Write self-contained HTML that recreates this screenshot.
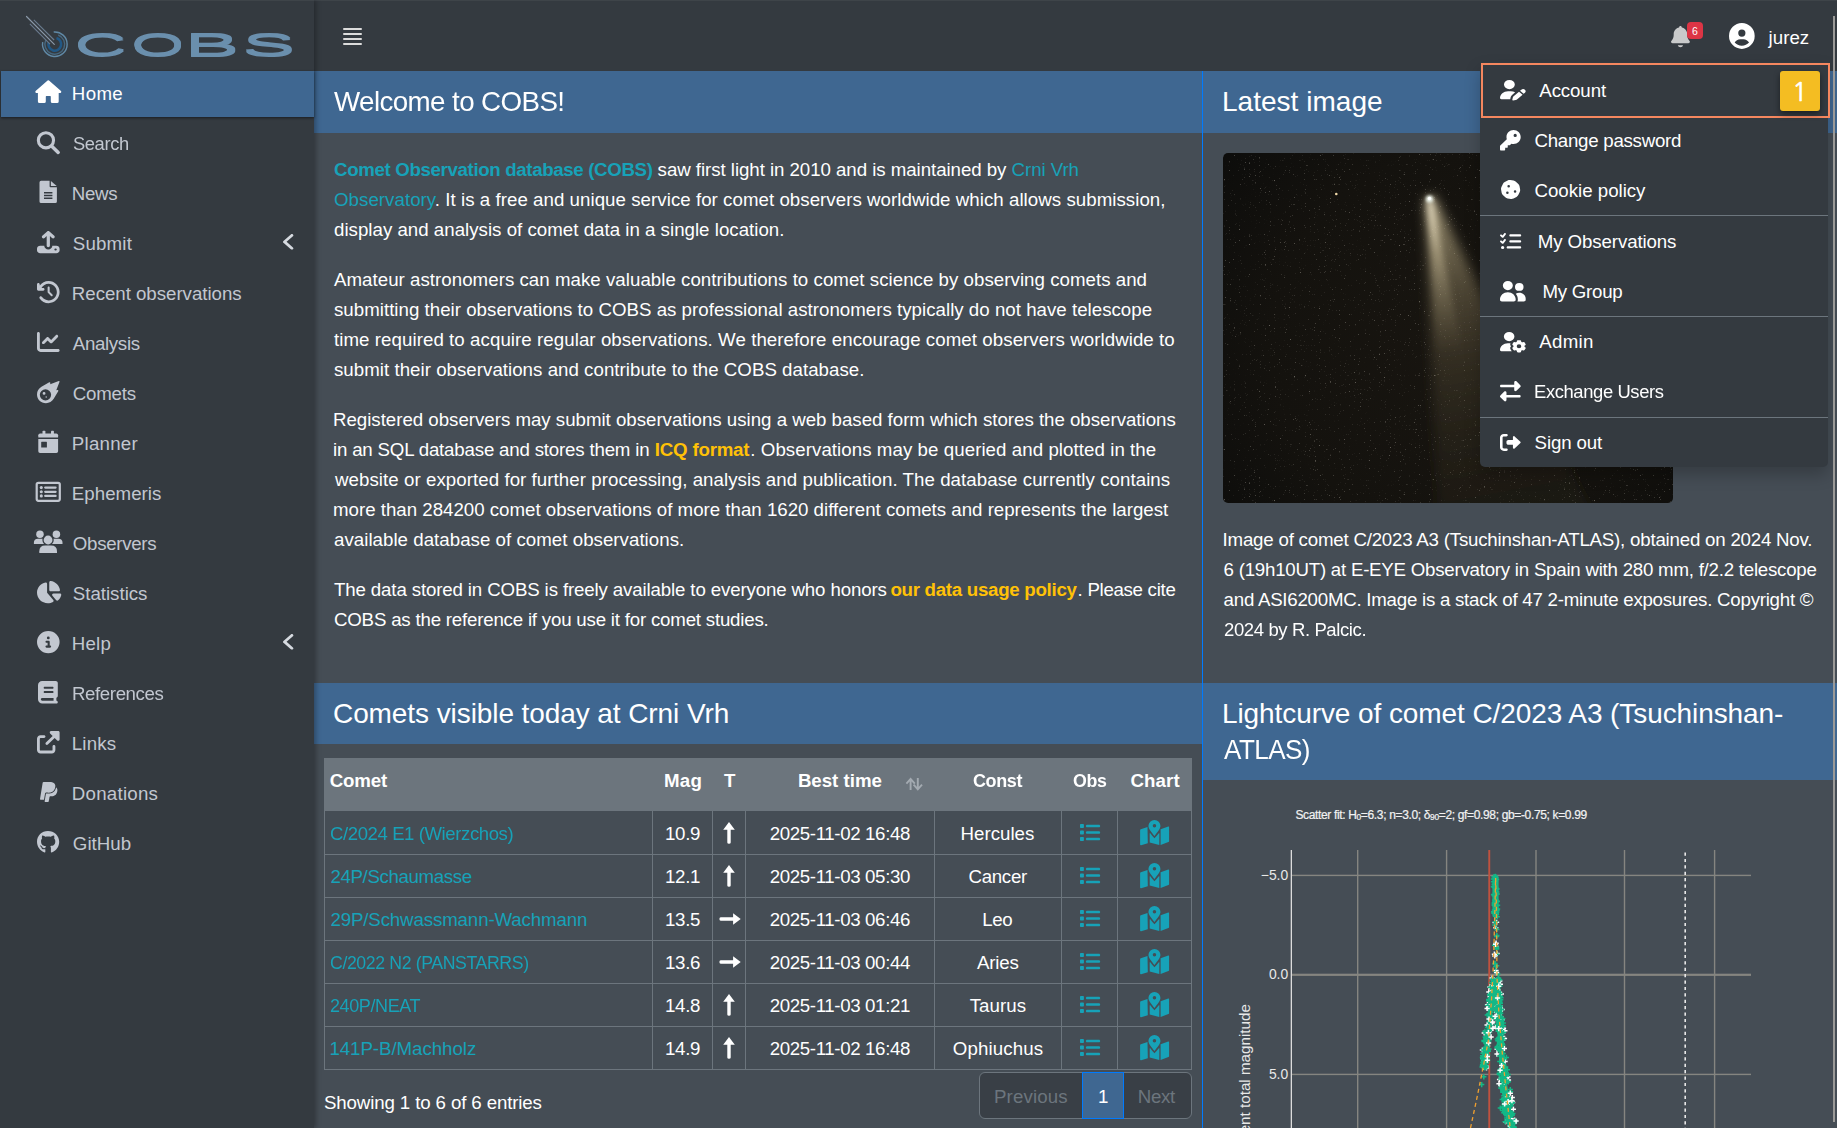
<!DOCTYPE html>
<html lang="en"><head><meta charset="utf-8"><title>COBS - Comet OBServation database</title>
<style>
html,body{margin:0;padding:0}
body{width:1837px;height:1128px;overflow:hidden;position:relative;background:#454d55;font-family:"Liberation Sans",sans-serif;color:#fff}
.abs,.t,.i{position:absolute}
.t{white-space:pre;line-height:30px;height:30px;margin:0;font-weight:400;text-decoration:none}
p{margin:0}
.t b{font-weight:700}
.i{display:block;overflow:visible}
#sidebar{left:0;top:0;width:314px;height:1128px;background:#343a40;box-shadow:2px 0 5px rgba(0,0,0,.3);z-index:5}
#navbar{left:314px;top:0;width:1523px;height:71px;background:#343a40;z-index:4}
#homebar{left:1px;top:71px;width:313px;height:46px;background:#3f6791;box-shadow:0 1px 3px rgba(0,0,0,.25),0 1px 2px rgba(0,0,0,.3)}
.hdr{background:#3f6791}
.bar{position:absolute;left:343px;width:19px;height:2px;background:#dcdcdc;border-radius:1px}
table{border-collapse:collapse}
.cell{position:absolute;border:1px solid #6c757d;box-sizing:border-box}
#dd{left:1480px;top:62px;width:348px;height:405px;background:#343a40;border-radius:0 0 5px 5px;box-shadow:0 8px 16px rgba(0,0,0,.22);z-index:20}
.div{position:absolute;left:0;width:348px;height:1px;background:#6c757d}
</style></head><body>

<aside id="sidebar" class="abs">
<div id="homebar" class="abs"></div>
<svg class="i" style="left:20px;top:8px;width:285px;height:58px" viewBox="20 8 285 58">
<g fill="none" stroke-linecap="butt"><path d="M56.5 38.1A6.4 6.4 0 1 1 48.6 42.6" stroke="#225885" stroke-width="2.6"/><path d="M58.2 35.0A9.9 9.9 0 1 1 45.8 40.1" stroke="#46677f" stroke-width="1.4"/><path d="M53.7 32.0A12.3 12.3 0 1 1 42.7 42.2" stroke="#6089a6" stroke-width="1.4"/><path d="M26.5 16.5 54.3 44.3" stroke="#8a98a8" stroke-width="1.2" stroke-linecap="round"/><path d="M33.8 19.9 54.1 40" stroke="#6a7b8e" stroke-width="1.1"/><path d="M29.9 23.8 50 44.1" stroke="#6a7b8e" stroke-width="1.1"/></g>
<defs><filter id="thk" filterUnits="userSpaceOnUse" x="70" y="25" width="230" height="40"><feOffset in="SourceGraphic" dy="-1.3" result="a"/><feOffset in="SourceGraphic" dy="1.3" result="b"/><feMerge><feMergeNode in="a"/><feMergeNode in="SourceGraphic"/><feMergeNode in="b"/></feMerge></filter></defs><text y="55.5" font-family="Liberation Sans, sans-serif" font-size="31.64" fill="#6b8fad" filter="url(#thk)"><tspan x="74.53" textLength="52.23" lengthAdjust="spacingAndGlyphs">C</tspan><tspan x="131.27" textLength="53.10" lengthAdjust="spacingAndGlyphs">O</tspan><tspan x="184.19" textLength="55.39" lengthAdjust="spacingAndGlyphs">B</tspan><tspan x="242.19" textLength="53.06" lengthAdjust="spacingAndGlyphs">S</tspan></text></svg>
<nav>
<svg class="i" style="left:33px;top:78px;width:30px;height:27px" viewBox="33 78 30 27"><path fill="#fff" d="M47.6 80.5Q48.3 79.9 49 80.5L61 90.9Q61.9 91.9 60.6 93H58.7V101.5Q58.7 103.1 57.1 103.1H52.4Q50.8 103.1 50.8 101.5V96.7Q50.8 96.1 50.2 96.1H46.4Q45.8 96.1 45.8 96.7V101.5Q45.8 103.1 44.2 103.1H39.5Q37.9 103.1 37.9 101.5V93H36Q34.7 91.9 35.6 90.9Z"/></svg>
<a href="#" class="t" style="left:71.80px;top:78.52px;font-size:18.7px;letter-spacing:0.348px;color:#fff;">Home</a>
<svg class="i" style="left:34px;top:129px;width:28px;height:27px" viewBox="34 129 28 27" fill="none" stroke="#c2c7d0"><circle cx="45.95" cy="140.3" r="7.6" stroke-width="3.1"/><path d="M51.8 146.2 58.2 152.4" stroke-width="3.5" stroke-linecap="round"/></svg>
<a href="#" class="t" style="left:72.80px;top:128.52px;font-size:18.7px;letter-spacing:-0.400px;color:#c2c7d0;transform:scaleX(0.9803);transform-origin:0 0;">Search</a>
<svg class="i" style="left:37px;top:178px;width:22px;height:27px" viewBox="37 178 22 27" fill="#c2c7d0"><path d="M41.1 180.8H49.6V186.3Q49.6 187.2 50.5 187.2H56.9V201.4Q56.9 203 55.3 203H41.1Q39.5 203 39.5 201.4V182.4Q39.5 180.8 41.1 180.8Z"/><path d="M50.9 181 56.7 186H50.9Z"/><path d="M44 192.8H52.4M44 195.5H52.4M44 198.2H52.4" stroke="#343a40" stroke-width="1.4" fill="none"/></svg>
<a href="#" class="t" style="left:71.80px;top:178.52px;font-size:18.7px;letter-spacing:-0.295px;color:#c2c7d0;">News</a>
<svg class="i" style="left:36.8px;top:230.8px;width:22.6px;height:22.2px;" viewBox="0.0 0.0 448.0 480.0" preserveAspectRatio="none" fill="#c2c7d0"><path d="M256 109.3V320c0 17.7-14.3 32-32 32s-32-14.3-32-32V109.3l-41.4 41.4c-12.5 12.5-32.8 12.5-45.3 0s-12.5-32.8 0-45.3l96-96c12.5-12.5 32.8-12.5 45.3 0l96 96c12.5 12.5 12.5 32.8 0 45.3s-32.8 12.5-45.3 0zM224 400c44.2 0 80-35.8 80-80h80c35.3 0 64 28.7 64 64v32c0 35.3-28.7 64-64 64H64c-35.3 0-64-28.7-64-64v-32c0-35.3 28.7-64 64-64h80c0 44.2 35.8 80 80 80m144 24a24 24 0 1 0 0-48 24 24 0 1 0 0 48"/></svg>
<a href="#" class="t" style="left:72.80px;top:228.52px;font-size:18.7px;letter-spacing:0.186px;color:#c2c7d0;">Submit</a>
<svg class="i" style="left:36.8px;top:281.0px;width:22.6px;height:22.2px;" viewBox="16.0 0.0 528.0 512.0" preserveAspectRatio="none" fill="#c2c7d0"><path d="M288 64c106 0 192 86 192 192s-86 192-192 192c-65.2 0-122.9-32.5-157.6-82.3-10.1-14.5-30.1-18-44.6-7.9s-18 30.1-7.9 44.6C124.1 468.6 201 512 288 512c141.4 0 256-114.6 256-256S429.4 0 288 0C202.3 0 126.5 42.1 80 106.7V80c0-17.7-14.3-32-32-32S16 62.3 16 80v112c0 17.7 14.3 32 32 32h112.1c17.7 0 32-14.3 32-32s-14.3-32-32-32h-38.3C154.9 102.6 217 64 288 64m24 88c0-13.3-10.7-24-24-24s-24 10.7-24 24v104c0 6.4 2.5 12.5 7 17l72 72c9.4 9.4 24.6 9.4 33.9 0s9.4-24.6 0-33.9l-65-65V152z"/></svg>
<a href="#" class="t" style="left:71.80px;top:278.52px;font-size:18.7px;letter-spacing:-0.029px;color:#c2c7d0;">Recent observations</a>
<svg class="i" style="left:36.8px;top:332.0px;width:22.6px;height:19.9px;" viewBox="0.0 32.0 512.0 448.0" preserveAspectRatio="none" fill="#c2c7d0"><path d="M64 64c0-17.7-14.3-32-32-32S0 46.3 0 64v336c0 44.2 35.8 80 80 80h400c17.7 0 32-14.3 32-32s-14.3-32-32-32H80c-8.8 0-16-7.2-16-16zm406.6 86.6c12.5-12.5 12.5-32.8 0-45.3s-32.8-12.5-45.3 0L320 210.7l-57.4-57.3c-12.5-12.5-32.8-12.5-45.3 0l-96 96c-12.5 12.5-12.5 32.8 0 45.3s32.8 12.5 45.3 0l73.4-73.4 57.4 57.4c12.5 12.5 32.8 12.5 45.3 0l128-128z"/></svg>
<a href="#" class="t" style="left:72.80px;top:328.52px;font-size:18.7px;letter-spacing:-0.335px;color:#c2c7d0;">Analysis</a>
<svg class="i" style="left:36.8px;top:380.8px;width:22.6px;height:22.2px;" viewBox="0.0 0.1 512.0 511.9" preserveAspectRatio="none" fill="#c2c7d0"><path d="M493.7.9 299.5 75.6l2.3-29.3c1-12.8-12.8-21.5-24-15.1L101.3 133.4C38.6 169.7 0 236.6 0 309c0 112.1 90.9 203 203 203 72.4 0 139.3-38.6 175.6-101.3l102.2-176.4c6.5-11.1-2.2-25-15.1-24l-29.3 2.3 74.7-194.2c.6-1.5.9-3.2.9-4.8 0-7.5-6-13.5-13.5-13.5q-2.55 0-4.8.9zM192 192a128 128 0 1 1 0 256 128 128 0 1 1 0-256m0 96a32 32 0 1 0-64 0 32 32 0 1 0 64 0m16 96a16 16 0 1 0 0-32 16 16 0 1 0 0 32"/></svg>
<a href="#" class="t" style="left:72.80px;top:378.52px;font-size:18.7px;letter-spacing:-0.228px;color:#c2c7d0;">Comets</a>
<svg class="i" style="left:36px;top:428px;width:25px;height:27px" viewBox="36 428 25 27" fill="#c2c7d0"><rect x="42.5" y="430.8" width="2.9" height="4.2" rx=".7"/><rect x="51" y="430.8" width="2.9" height="4.2" rx=".7"/><path d="M38.3 435.3Q38.3 433.5 40.1 433.5H56.3Q58.1 433.5 58.1 435.3V437.6H38.3Z"/><path fill-rule="evenodd" d="M38.3 438.9H58.1V451.2Q58.1 453 56.3 453H40.1Q38.3 453 38.3 451.2ZM41.6 441.8Q41.2 441.8 41.2 442.2V447.2Q41.2 447.6 41.6 447.6H46.5Q46.9 447.6 46.9 447.2V442.2Q46.9 441.8 46.5 441.8Z"/></svg>
<a href="#" class="t" style="left:71.80px;top:428.52px;font-size:18.7px;letter-spacing:0.235px;color:#c2c7d0;">Planner</a>
<svg class="i" style="left:33px;top:479px;width:30px;height:25px" viewBox="33 479 30 25" fill="#c2c7d0"><rect x="36.7" y="482.9" width="23.1" height="17.9" rx="1.7" fill="none" stroke="#c2c7d0" stroke-width="2.2"/><circle cx="41.3" cy="487.6" r="1.55"/><rect x="44.1" y="486.5" width="12.6" height="2.2" rx="1.1"/><circle cx="41.3" cy="491.8" r="1.55"/><rect x="44.1" y="490.7" width="12.6" height="2.2" rx="1.1"/><circle cx="41.3" cy="495.9" r="1.55"/><rect x="44.1" y="494.8" width="12.6" height="2.2" rx="1.1"/></svg>
<a href="#" class="t" style="left:71.80px;top:478.52px;font-size:18.7px;letter-spacing:0.028px;color:#c2c7d0;">Ephemeris</a>
<svg class="i" style="left:32px;top:528px;width:33px;height:27px" viewBox="32 528 33 27" fill="#c2c7d0"><circle cx="39.95" cy="534.3" r="3.75"/><circle cx="56.4" cy="534.3" r="3.75"/><path d="M33.9 543.9V542.6Q33.9 538.8 38 538.8H45V543.9ZM62.5 543.9V542.6Q62.5 538.8 58.4 538.8H51V543.9Z"/><circle cx="48.05" cy="540" r="5.7" fill="#343a40"/><circle cx="48.05" cy="540" r="4.4"/><path d="M39.3 553V551.2Q39.3 545.4 45.2 545.4H51Q57 545.4 57 551.2V553Q57 553.1 56.9 553.1H39.4Q39.3 553.1 39.3 553Z"/></svg>
<a href="#" class="t" style="left:72.80px;top:528.52px;font-size:18.7px;letter-spacing:-0.294px;color:#c2c7d0;">Observers</a>
<svg class="i" style="left:36.8px;top:580.8px;width:24.3px;height:22.2px;" viewBox="32.4 1.9 539.5 510.1" preserveAspectRatio="none" fill="#c2c7d0"><path d="M512.4 240h-176c-17.7 0-32-14.3-32-32V32c0-17.7 14.4-32.2 31.9-29.9 107 14.2 191.8 99 206 206 2.3 17.5-12.2 31.9-29.9 31.9M222.6 37.2c18.1-3.8 33.8 11 33.8 29.5V264c0 5.6 2 11 5.5 15.3L394 438.7c11.7 14.1 9.2 35.4-6.9 44.1C353 501.4 313.9 512 272.4 512c-132.5 0-240-107.5-240-240 0-115.5 81.5-211.9 190.2-234.8M477.8 288h64c18.5 0 33.3 15.7 29.5 33.8-10.2 48.4-35 91.4-69.6 124.2-12.3 11.7-31.6 9.2-42.4-3.9l-84.4-101.7c-17.3-20.9-2.4-52.4 24.6-52.4h78.2z"/></svg>
<a href="#" class="t" style="left:72.80px;top:578.52px;font-size:18.7px;letter-spacing:-0.014px;color:#c2c7d0;">Statistics</a>
<svg class="i" style="left:36.8px;top:630.8px;width:22.6px;height:22.2px;" viewBox="0.0 0.0 512.0 512.0" preserveAspectRatio="none" fill="#c2c7d0"><path d="M256 512a256 256 0 1 0 0-512 256 256 0 1 0 0 512m-32-352a32 32 0 1 1 64 0 32 32 0 1 1-64 0m-8 64h48c13.3 0 24 10.7 24 24v88h8c13.3 0 24 10.7 24 24s-10.7 24-24 24h-80c-13.3 0-24-10.7-24-24s10.7-24 24-24h24v-64h-24c-13.3 0-24-10.7-24-24s10.7-24 24-24"/></svg>
<a href="#" class="t" style="left:71.80px;top:628.52px;font-size:18.7px;letter-spacing:0.187px;color:#c2c7d0;">Help</a>
<svg class="i" style="left:38.3px;top:680.6px;width:19.8px;height:22.6px;" viewBox="0.0 0.0 448.0 512.0" preserveAspectRatio="none" fill="#c2c7d0"><path d="M384 512H96c-53 0-96-43-96-96V96C0 43 43 0 96 0h304c26.5 0 48 21.5 48 48v288c0 20.9-13.4 38.7-32 45.3V448c17.7 0 32 14.3 32 32s-14.3 32-32 32zM96 384c-17.7 0-32 14.3-32 32s14.3 32 32 32h256v-64zm32-232c0 13.3 10.7 24 24 24h176c13.3 0 24-10.7 24-24s-10.7-24-24-24H152c-13.3 0-24 10.7-24 24m24 72c-13.3 0-24 10.7-24 24s10.7 24 24 24h176c13.3 0 24-10.7 24-24s-10.7-24-24-24z"/></svg>
<a href="#" class="t" style="left:71.80px;top:678.52px;font-size:18.7px;letter-spacing:-0.400px;color:#c2c7d0;transform:scaleX(0.9987);transform-origin:0 0;">References</a>
<svg class="i" style="left:36.8px;top:730.6px;width:22.6px;height:22.4px;" viewBox="0.0 0.0 512.0 512.0" preserveAspectRatio="none" fill="#c2c7d0"><path d="M290.4 19.8C295.4 7.8 307.1 0 320 0h160c17.7 0 32 14.3 32 32v160c0 12.9-7.8 24.6-19.8 29.6s-25.7 2.2-34.9-6.9L400 157.3 246.6 310.6c-12.5 12.5-32.8 12.5-45.3 0s-12.5-32.8 0-45.3L354.7 112l-57.3-57.4c-9.2-9.2-11.9-22.9-6.9-34.9zM0 176c0-44.2 35.8-80 80-80h80c17.7 0 32 14.3 32 32s-14.3 32-32 32H80c-8.8 0-16 7.2-16 16v256c0 8.8 7.2 16 16 16h256c8.8 0 16-7.2 16-16v-80c0-17.7 14.3-32 32-32s32 14.3 32 32v80c0 44.2-35.8 80-80 80H80c-44.2 0-80-35.8-80-80z"/></svg>
<a href="#" class="t" style="left:71.80px;top:728.52px;font-size:18.7px;letter-spacing:0.155px;color:#c2c7d0;">Links</a>
<svg class="i" style="left:39.5px;top:781.7px;width:17.4px;height:19.9px;" viewBox="0.6 29.3 383.9 453.5" preserveAspectRatio="none" fill="#c2c7d0"><path d="M111.9 295.9c-3.5 19.2-17.4 108.7-21.5 134-.3 1.8-1 2.5-3 2.5H12.8c-7.6 0-13.1-6.6-12.1-13.9L59.3 46.6c1.5-9.6 10.1-16.9 20-16.9 152.3 0 165.1-3.7 204 11.4 60.1 23.3 65.6 79.5 44 140.3-21.5 62.6-72.5 89.5-140.1 90.3-43.4.7-69.5-7-75.3 24.2M357.6 152c-1.8-1.3-2.5-1.8-3 1.3-2 11.4-5.1 22.5-8.8 33.6-39.9 113.8-150.5 103.9-204.5 103.9-6.1 0-10.1 3.3-10.9 9.4-22.6 140.4-27.1 169.7-27.1 169.7-1 7.1 3.5 12.9 10.6 12.9h63.5c8.6 0 15.7-6.3 17.4-14.9.7-5.4-1.1 6.1 14.4-91.3 4.6-22 14.3-19.7 29.3-19.7 71 0 126.4-28.8 142.9-112.3 6.5-34.8 4.6-71.4-23.8-92.6"/></svg>
<a href="#" class="t" style="left:71.80px;top:778.52px;font-size:18.7px;letter-spacing:0.249px;color:#c2c7d0;">Donations</a>
<svg class="i" style="left:36.8px;top:830.8px;width:22.2px;height:21.5px;" viewBox="8.0 8.0 496.0 483.6" preserveAspectRatio="none" fill="#c2c7d0"><path d="M173.9 397.4c0 2-2.3 3.6-5.2 3.6-3.3.3-5.6-1.3-5.6-3.6 0-2 2.3-3.6 5.2-3.6 3-.3 5.6 1.3 5.6 3.6m-31.1-4.5c-.7 2 1.3 4.3 4.3 4.9 2.6 1 5.6 0 6.2-2s-1.3-4.3-4.3-5.2c-2.6-.7-5.5.3-6.2 2.3m44.2-1.7c-2.9.7-4.9 2.6-4.6 4.9.3 2 2.9 3.3 5.9 2.6 2.9-.7 4.9-2.6 4.6-4.6-.3-1.9-3-3.2-5.9-2.9M252.8 8C114.1 8 8 113.3 8 252c0 110.9 69.8 205.8 169.5 239.2 12.8 2.3 17.3-5.6 17.3-12.1 0-6.2-.3-40.4-.3-61.4 0 0-70 15-84.7-29.8 0 0-11.4-29.1-27.8-36.6 0 0-22.9-15.7 1.6-15.4 0 0 24.9 2 38.6 25.8 21.9 38.6 58.6 27.5 72.9 20.9 2.3-16 8.8-27.1 16-33.7-55.9-6.2-112.3-14.3-112.3-110.5 0-27.5 7.6-41.3 23.6-58.9-2.6-6.5-11.1-33.3 2.6-67.9 20.9-6.5 69 27 69 27 20-5.6 41.5-8.5 62.8-8.5s42.8 2.9 62.8 8.5c0 0 48.1-33.6 69-27 13.7 34.7 5.2 61.4 2.6 67.9 16 17.7 25.8 31.5 25.8 58.9 0 96.5-58.9 104.2-114.8 110.5 9.2 7.9 17 22.9 17 46.4 0 33.7-.3 75.4-.3 83.6 0 6.5 4.6 14.4 17.3 12.1C436.2 457.8 504 362.9 504 252 504 113.3 391.5 8 252.8 8M105.2 352.9c-1.3 1-1 3.3.7 5.2 1.6 1.6 3.9 2.3 5.2 1 1.3-1 1-3.3-.7-5.2-1.6-1.6-3.9-2.3-5.2-1m-10.8-8.1c-.7 1.3.3 2.9 2.3 3.9 1.6 1 3.6.7 4.3-.7.7-1.3-.3-2.9-2.3-3.9-2-.6-3.6-.3-4.3.7m32.4 35.6c-1.6 1.3-1 4.3 1.3 6.2 2.3 2.3 5.2 2.6 6.5 1 1.3-1.3.7-4.3-1.3-6.2-2.2-2.3-5.2-2.6-6.5-1m-11.4-14.7c-1.6 1-1.6 3.6 0 5.9s4.3 3.3 5.6 2.3c1.6-1.3 1.6-3.9 0-6.2-1.4-2.3-4-3.3-5.6-2"/></svg>
<a href="#" class="t" style="left:72.80px;top:828.52px;font-size:18.7px;letter-spacing:0.046px;color:#c2c7d0;">GitHub</a>
<svg class="i" style="left:282.8px;top:233.7px;width:10.4px;height:15.6px;" viewBox="0.0 63.9 224.1 384.1" preserveAspectRatio="none" fill="#d6dae0"><path d="M9.4 233.4c-12.5 12.5-12.5 32.8 0 45.3l160 160c12.5 12.5 32.8 12.5 45.3 0s12.5-32.8 0-45.3L77.3 256l137.3-137.4c12.5-12.5 12.5-32.8 0-45.3s-32.8-12.5-45.3 0l-160 160z"/></svg>
<svg class="i" style="left:282.8px;top:633.7px;width:10.4px;height:15.6px;" viewBox="0.0 63.9 224.1 384.1" preserveAspectRatio="none" fill="#d6dae0"><path d="M9.4 233.4c-12.5 12.5-12.5 32.8 0 45.3l160 160c12.5 12.5 32.8 12.5 45.3 0s12.5-32.8 0-45.3L77.3 256l137.3-137.4c12.5-12.5 12.5-32.8 0-45.3s-32.8-12.5-45.3 0l-160 160z"/></svg>
</nav></aside>
<header><div id="navbar" class="abs"></div>
<div class="abs" style="left:0;top:0;width:1837px;height:1px;background:rgba(255,255,255,.05);z-index:30"></div>
<div style="position:absolute;z-index:6;left:0;top:0">
<div class="bar" style="top:28px"></div>
<div class="bar" style="top:33px"></div>
<div class="bar" style="top:38px"></div>
<div class="bar" style="top:43px"></div>
<svg class="i" style="left:1671.1px;top:25.7px;width:18.9px;height:21.3px;" viewBox="-0.0 0.0 447.9 512.0" preserveAspectRatio="none" fill="#c9cacb"><path d="M224 0c-17.7 0-32 14.3-32 32v3.2C119 50 64 114.6 64 192v21.7c0 48.1-16.4 94.8-46.4 132.4l-9.8 12.2C2.7 364.6 0 372.4 0 380.5 0 400.1 15.9 416 35.5 416h376.9c19.6 0 35.5-15.9 35.5-35.5 0-8.1-2.7-15.9-7.8-22.2l-9.8-12.2c-29.9-37.6-46.3-84.3-46.3-132.4V192c0-77.4-55-142-128-156.8V32c0-17.7-14.3-32-32-32m-62 464c7.1 27.6 32.2 48 62 48s54.9-20.4 62-48z"/></svg>
<div class="abs" style="left:1687px;top:22px;width:16px;height:17px;background:#dc3545;border-radius:4px"></div>
<span class="t" style="left:1692.00px;top:16.46px;font-size:10.5px;letter-spacing:0.000px;color:#fff;">6</span>
<svg class="i" style="left:1728.7px;top:22.5px;width:25.7px;height:25.9px;" viewBox="0.0 0.0 512.0 512.0" preserveAspectRatio="none" fill="#fff"><path d="M399 384.2c-22.1-38.4-63.6-64.2-111-64.2h-64c-47.4 0-88.9 25.8-111 64.2 35.2 39.2 86.2 63.8 143 63.8s107.8-24.7 143-63.8M0 256a256 256 0 1 1 512 0 256 256 0 1 1-512 0m256 16a72 72 0 1 0 0-144 72 72 0 1 0 0 144"/></svg>
<a href="#" class="t" style="left:1768.60px;top:22.52px;font-size:18.7px;letter-spacing:0.010px;color:#fff;">jurez</a>
</div></header>
<main><section>
<div class="abs hdr" style="left:314px;top:71px;width:888px;height:62px"></div>
<h3 class="t" style="left:334.00px;top:86.90px;font-size:28px;letter-spacing:-0.599px;color:#fff;transform:scaleX(0.9907);transform-origin:0 0;">Welcome to COBS!</h3>
<p>
<span class="t" style="left:334.00px;top:154.52px;font-size:18.7px;letter-spacing:-0.353px;color:#17a2b8;font-weight:700;">Comet Observation database (COBS)</span>
<span class="t" style="left:657.60px;top:154.52px;font-size:18.7px;letter-spacing:-0.053px;color:#fff;">saw first light in 2010 and is maintained by <span style="color:#17a2b8">Crni Vrh</span></span>
<span class="t" style="left:334.00px;top:184.52px;font-size:18.7px;letter-spacing:0.041px;color:#fff;"><span style="color:#17a2b8">Observatory</span>. It is a free and unique service for comet observers worldwide which allows submission,</span>
<span class="t" style="left:334.00px;top:214.52px;font-size:18.7px;letter-spacing:0.011px;color:#fff;">display and analysis of comet data in a single location.</span>
</p><p>
<span class="t" style="left:334.00px;top:264.52px;font-size:18.7px;letter-spacing:0.031px;color:#fff;">Amateur astronomers can make valuable contributions to comet science by observing comets and</span>
<span class="t" style="left:334.00px;top:294.52px;font-size:18.7px;letter-spacing:0.017px;color:#fff;">submitting their observations to COBS as professional astronomers typically do not have telescope</span>
<span class="t" style="left:334.00px;top:324.52px;font-size:18.7px;letter-spacing:0.061px;color:#fff;">time required to acquire regular observations. We therefore encourage comet observers worldwide to</span>
<span class="t" style="left:334.00px;top:354.52px;font-size:18.7px;letter-spacing:0.027px;color:#fff;">submit their observations and contribute to the COBS database.</span>
</p><p>
<span class="t" style="left:333.00px;top:404.52px;font-size:18.7px;letter-spacing:-0.018px;color:#fff;">Registered observers may submit observations using a web based form which stores the observations</span>
<span class="t" style="left:333.00px;top:434.52px;font-size:18.7px;letter-spacing:-0.190px;color:#fff;">in an SQL database and stores them in</span>
<span class="t" style="left:654.80px;top:434.52px;font-size:18.7px;letter-spacing:-0.204px;color:#ffc107;font-weight:700;">ICQ format</span>
<span class="t" style="left:750.30px;top:434.52px;font-size:18.7px;letter-spacing:0.060px;color:#fff;">. Observations may be queried and plotted in the</span>
<span class="t" style="left:335.00px;top:464.52px;font-size:18.7px;letter-spacing:0.055px;color:#fff;">website or exported for further processing, analysis and publication. The database currently contains</span>
<span class="t" style="left:333.00px;top:494.52px;font-size:18.7px;letter-spacing:-0.007px;color:#fff;">more than 284200 comet observations of more than 1620 different comets and represents the largest</span>
<span class="t" style="left:334.00px;top:524.52px;font-size:18.7px;letter-spacing:0.029px;color:#fff;">available database of comet observations.</span>
</p><p>
<span class="t" style="left:334.00px;top:574.52px;font-size:18.7px;letter-spacing:-0.140px;color:#fff;">The data stored in COBS is freely available to everyone who honors</span>
<span class="t" style="left:890.40px;top:574.52px;font-size:18.7px;letter-spacing:-0.281px;color:#ffc107;font-weight:700;">our data usage policy</span>
<span class="t" style="left:1077.60px;top:574.52px;font-size:18.7px;letter-spacing:-0.300px;color:#fff;">. Please cite</span>
<span class="t" style="left:334.00px;top:604.52px;font-size:18.7px;letter-spacing:-0.204px;color:#fff;">COBS as the reference if you use it for comet studies.</span>
</p>
</section><section>
<div class="abs hdr" style="left:314px;top:683px;width:888px;height:61px"></div>
<h3 class="t" style="left:333.00px;top:698.90px;font-size:28px;letter-spacing:-0.084px;color:#fff;">Comets visible today at Crni Vrh</h3>
<div class="abs" style="left:324px;top:758px;width:868px;height:53px;background:#6c757d"></div>
<span class="t" style="left:329.80px;top:766.02px;font-size:18.7px;letter-spacing:-0.180px;color:#fff;font-weight:700;">Comet</span>
<span class="t" style="left:664.00px;top:766.02px;font-size:18.7px;letter-spacing:0.270px;color:#fff;font-weight:700;">Mag</span>
<span class="t" style="left:723.90px;top:766.02px;font-size:18.7px;letter-spacing:0.000px;color:#fff;font-weight:700;">T</span>
<span class="t" style="left:797.90px;top:766.02px;font-size:18.7px;letter-spacing:-0.016px;color:#fff;font-weight:700;">Best time</span>
<span class="t" style="left:973.30px;top:766.02px;font-size:18.7px;letter-spacing:-0.400px;color:#fff;font-weight:700;transform:scaleX(0.9625);transform-origin:0 0;">Const</span>
<span class="t" style="left:1072.70px;top:766.02px;font-size:18.7px;letter-spacing:-0.400px;color:#fff;font-weight:700;transform:scaleX(0.9502);transform-origin:0 0;">Obs</span>
<span class="t" style="left:1130.50px;top:766.02px;font-size:18.7px;letter-spacing:0.081px;color:#fff;font-weight:700;">Chart</span>
<svg class="i" style="left:904px;top:776px;width:21px;height:16px" viewBox="904 776 21 16"><path d="M910.6 790V779M906.4 783.6 910.6 778.9 914.8 783.6M917.8 778V789M913.6 784.6 917.8 789.3 922 784.6" fill="none" stroke="#a3aab1" stroke-width="1.9"/></svg>
<div class="abs" style="left:324px;top:854px;width:868px;height:1px;background:#6c757d"></div>
<div class="abs" style="left:324px;top:897px;width:868px;height:1px;background:#6c757d"></div>
<div class="abs" style="left:324px;top:940px;width:868px;height:1px;background:#6c757d"></div>
<div class="abs" style="left:324px;top:983px;width:868px;height:1px;background:#6c757d"></div>
<div class="abs" style="left:324px;top:1026px;width:868px;height:1px;background:#6c757d"></div>
<div class="abs" style="left:324px;top:1069px;width:868px;height:1px;background:#6c757d"></div>
<div class="abs" style="left:324px;top:811px;width:1px;height:259px;background:#6c757d"></div>
<div class="abs" style="left:652px;top:811px;width:1px;height:259px;background:#6c757d"></div>
<div class="abs" style="left:712px;top:811px;width:1px;height:259px;background:#6c757d"></div>
<div class="abs" style="left:745px;top:811px;width:1px;height:259px;background:#6c757d"></div>
<div class="abs" style="left:934px;top:811px;width:1px;height:259px;background:#6c757d"></div>
<div class="abs" style="left:1061px;top:811px;width:1px;height:259px;background:#6c757d"></div>
<div class="abs" style="left:1117px;top:811px;width:1px;height:259px;background:#6c757d"></div>
<div class="abs" style="left:1191px;top:811px;width:1px;height:259px;background:#6c757d"></div>
<a href="#" class="t" style="left:330.40px;top:818.52px;font-size:18.7px;letter-spacing:-0.400px;color:#17a2b8;transform:scaleX(0.9916);transform-origin:0 0;">C/2024 E1 (Wierzchos)</a>
<span class="t" style="left:665.00px;top:818.52px;font-size:18.7px;letter-spacing:-0.326px;color:#fff;">10.9</span>
<svg class="i" style="left:722.4px;top:820.5px;width:14px;height:24px" viewBox="-7 -12 14 24"><path fill="#fff" d="M0-10.9 5.8-3.2H1.7V9.4Q1.7 10.7 0 10.7T-1.7 9.4V-3.2H-5.8Z"/></svg>
<span class="t" style="left:769.70px;top:818.52px;font-size:18.7px;letter-spacing:-0.364px;color:#fff;">2025-11-02 16:48</span>
<span class="t" style="left:960.45px;top:818.52px;font-size:18.7px;letter-spacing:0.030px;color:#fff;">Hercules</span>
<svg class="i" style="left:1079.5px;top:824.0px;width:20.2px;height:17.0px;" viewBox="16.0 48.0 496.0 416.0" preserveAspectRatio="none" fill="#17a2b8"><path d="M40 48c-13.3 0-24 10.7-24 24v48c0 13.3 10.7 24 24 24h48c13.3 0 24-10.7 24-24V72c0-13.3-10.7-24-24-24zm152 16c-17.7 0-32 14.3-32 32s14.3 32 32 32h288c17.7 0 32-14.3 32-32s-14.3-32-32-32zm0 160c-17.7 0-32 14.3-32 32s14.3 32 32 32h288c17.7 0 32-14.3 32-32s-14.3-32-32-32zm0 160c-17.7 0-32 14.3-32 32s14.3 32 32 32h288c17.7 0 32-14.3 32-32s-14.3-32-32-32zM16 232v48c0 13.3 10.7 24 24 24h48c13.3 0 24-10.7 24-24v-48c0-13.3-10.7-24-24-24H40c-13.3 0-24 10.7-24 24m24 136c-13.3 0-24 10.7-24 24v48c0 13.3 10.7 24 24 24h48c13.3 0 24-10.7 24-24v-48c0-13.3-10.7-24-24-24z"/></svg>
<svg class="i" style="left:1139.8px;top:819.8px;width:29.3px;height:25.4px" viewBox="0 0 29.3 25.4" fill="#17a2b8"><path d="M.1 10.2Q.1 9.5.8 9.3L7.5 7.1 7.8 23.3 1.1 25.3Q.2 25.5.1 24.6ZM20.6 9.2 28.3 6.5Q29.1 6.3 29.1 7.2V21.2Q29.1 21.8 28.4 22.1L20.6 24.9ZM9.7 13.2 10.3 13.2Q12.2 15.9 14.45 18.3 16.7 15.9 18.8 13.2L19.4 13.2 19.3 25.1 9.7 22.6Z"/><path fill-rule="evenodd" d="M14.45 0A6 6 0 0 1 20.45 6C20.45 8.7 17.2 12.6 14.45 15.9 11.7 12.6 8.45 8.7 8.45 6A6 6 0 0 1 14.45 0ZM14.45 3.9A1.75 1.75 0 1 0 14.45 7.4 1.75 1.75 0 1 0 14.45 3.9Z"/></svg>
<a href="#" class="t" style="left:330.40px;top:861.52px;font-size:18.7px;letter-spacing:-0.360px;color:#17a2b8;">24P/Schaumasse</a>
<span class="t" style="left:665.00px;top:861.52px;font-size:18.7px;letter-spacing:-0.326px;color:#fff;">12.1</span>
<svg class="i" style="left:722.4px;top:863.5px;width:14px;height:24px" viewBox="-7 -12 14 24"><path fill="#fff" d="M0-10.9 5.8-3.2H1.7V9.4Q1.7 10.7 0 10.7T-1.7 9.4V-3.2H-5.8Z"/></svg>
<span class="t" style="left:769.70px;top:861.52px;font-size:18.7px;letter-spacing:-0.364px;color:#fff;">2025-11-03 05:30</span>
<span class="t" style="left:968.50px;top:861.52px;font-size:18.7px;letter-spacing:-0.304px;color:#fff;">Cancer</span>
<svg class="i" style="left:1079.5px;top:867.0px;width:20.2px;height:17.0px;" viewBox="16.0 48.0 496.0 416.0" preserveAspectRatio="none" fill="#17a2b8"><path d="M40 48c-13.3 0-24 10.7-24 24v48c0 13.3 10.7 24 24 24h48c13.3 0 24-10.7 24-24V72c0-13.3-10.7-24-24-24zm152 16c-17.7 0-32 14.3-32 32s14.3 32 32 32h288c17.7 0 32-14.3 32-32s-14.3-32-32-32zm0 160c-17.7 0-32 14.3-32 32s14.3 32 32 32h288c17.7 0 32-14.3 32-32s-14.3-32-32-32zm0 160c-17.7 0-32 14.3-32 32s14.3 32 32 32h288c17.7 0 32-14.3 32-32s-14.3-32-32-32zM16 232v48c0 13.3 10.7 24 24 24h48c13.3 0 24-10.7 24-24v-48c0-13.3-10.7-24-24-24H40c-13.3 0-24 10.7-24 24m24 136c-13.3 0-24 10.7-24 24v48c0 13.3 10.7 24 24 24h48c13.3 0 24-10.7 24-24v-48c0-13.3-10.7-24-24-24z"/></svg>
<svg class="i" style="left:1139.8px;top:862.8px;width:29.3px;height:25.4px" viewBox="0 0 29.3 25.4" fill="#17a2b8"><path d="M.1 10.2Q.1 9.5.8 9.3L7.5 7.1 7.8 23.3 1.1 25.3Q.2 25.5.1 24.6ZM20.6 9.2 28.3 6.5Q29.1 6.3 29.1 7.2V21.2Q29.1 21.8 28.4 22.1L20.6 24.9ZM9.7 13.2 10.3 13.2Q12.2 15.9 14.45 18.3 16.7 15.9 18.8 13.2L19.4 13.2 19.3 25.1 9.7 22.6Z"/><path fill-rule="evenodd" d="M14.45 0A6 6 0 0 1 20.45 6C20.45 8.7 17.2 12.6 14.45 15.9 11.7 12.6 8.45 8.7 8.45 6A6 6 0 0 1 14.45 0ZM14.45 3.9A1.75 1.75 0 1 0 14.45 7.4 1.75 1.75 0 1 0 14.45 3.9Z"/></svg>
<a href="#" class="t" style="left:330.40px;top:904.52px;font-size:18.7px;letter-spacing:-0.131px;color:#17a2b8;">29P/Schwassmann-Wachmann</a>
<span class="t" style="left:665.00px;top:904.52px;font-size:18.7px;letter-spacing:-0.326px;color:#fff;">13.5</span>
<svg class="i" style="left:717.5px;top:911.5px;width:24px;height:14px" viewBox="-12 -7 24 14"><path fill="#fff" d="M10.7 0 3.1 5.7V1.7H-9.3Q-10.6 1.7-10.6 0T-9.3-1.7H3.1V-5.7Z"/></svg>
<span class="t" style="left:769.70px;top:904.52px;font-size:18.7px;letter-spacing:-0.364px;color:#fff;">2025-11-03 06:46</span>
<span class="t" style="left:982.15px;top:904.52px;font-size:18.7px;letter-spacing:-0.293px;color:#fff;">Leo</span>
<svg class="i" style="left:1079.5px;top:910.0px;width:20.2px;height:17.0px;" viewBox="16.0 48.0 496.0 416.0" preserveAspectRatio="none" fill="#17a2b8"><path d="M40 48c-13.3 0-24 10.7-24 24v48c0 13.3 10.7 24 24 24h48c13.3 0 24-10.7 24-24V72c0-13.3-10.7-24-24-24zm152 16c-17.7 0-32 14.3-32 32s14.3 32 32 32h288c17.7 0 32-14.3 32-32s-14.3-32-32-32zm0 160c-17.7 0-32 14.3-32 32s14.3 32 32 32h288c17.7 0 32-14.3 32-32s-14.3-32-32-32zm0 160c-17.7 0-32 14.3-32 32s14.3 32 32 32h288c17.7 0 32-14.3 32-32s-14.3-32-32-32zM16 232v48c0 13.3 10.7 24 24 24h48c13.3 0 24-10.7 24-24v-48c0-13.3-10.7-24-24-24H40c-13.3 0-24 10.7-24 24m24 136c-13.3 0-24 10.7-24 24v48c0 13.3 10.7 24 24 24h48c13.3 0 24-10.7 24-24v-48c0-13.3-10.7-24-24-24z"/></svg>
<svg class="i" style="left:1139.8px;top:905.8px;width:29.3px;height:25.4px" viewBox="0 0 29.3 25.4" fill="#17a2b8"><path d="M.1 10.2Q.1 9.5.8 9.3L7.5 7.1 7.8 23.3 1.1 25.3Q.2 25.5.1 24.6ZM20.6 9.2 28.3 6.5Q29.1 6.3 29.1 7.2V21.2Q29.1 21.8 28.4 22.1L20.6 24.9ZM9.7 13.2 10.3 13.2Q12.2 15.9 14.45 18.3 16.7 15.9 18.8 13.2L19.4 13.2 19.3 25.1 9.7 22.6Z"/><path fill-rule="evenodd" d="M14.45 0A6 6 0 0 1 20.45 6C20.45 8.7 17.2 12.6 14.45 15.9 11.7 12.6 8.45 8.7 8.45 6A6 6 0 0 1 14.45 0ZM14.45 3.9A1.75 1.75 0 1 0 14.45 7.4 1.75 1.75 0 1 0 14.45 3.9Z"/></svg>
<a href="#" class="t" style="left:330.40px;top:947.52px;font-size:18.7px;letter-spacing:-0.400px;color:#17a2b8;transform:scaleX(0.9458);transform-origin:0 0;">C/2022 N2 (PANSTARRS)</a>
<span class="t" style="left:665.00px;top:947.52px;font-size:18.7px;letter-spacing:-0.326px;color:#fff;">13.6</span>
<svg class="i" style="left:717.5px;top:954.5px;width:24px;height:14px" viewBox="-12 -7 24 14"><path fill="#fff" d="M10.7 0 3.1 5.7V1.7H-9.3Q-10.6 1.7-10.6 0T-9.3-1.7H3.1V-5.7Z"/></svg>
<span class="t" style="left:769.70px;top:947.52px;font-size:18.7px;letter-spacing:-0.364px;color:#fff;">2025-11-03 00:44</span>
<span class="t" style="left:976.95px;top:947.52px;font-size:18.7px;letter-spacing:-0.158px;color:#fff;">Aries</span>
<svg class="i" style="left:1079.5px;top:953.0px;width:20.2px;height:17.0px;" viewBox="16.0 48.0 496.0 416.0" preserveAspectRatio="none" fill="#17a2b8"><path d="M40 48c-13.3 0-24 10.7-24 24v48c0 13.3 10.7 24 24 24h48c13.3 0 24-10.7 24-24V72c0-13.3-10.7-24-24-24zm152 16c-17.7 0-32 14.3-32 32s14.3 32 32 32h288c17.7 0 32-14.3 32-32s-14.3-32-32-32zm0 160c-17.7 0-32 14.3-32 32s14.3 32 32 32h288c17.7 0 32-14.3 32-32s-14.3-32-32-32zm0 160c-17.7 0-32 14.3-32 32s14.3 32 32 32h288c17.7 0 32-14.3 32-32s-14.3-32-32-32zM16 232v48c0 13.3 10.7 24 24 24h48c13.3 0 24-10.7 24-24v-48c0-13.3-10.7-24-24-24H40c-13.3 0-24 10.7-24 24m24 136c-13.3 0-24 10.7-24 24v48c0 13.3 10.7 24 24 24h48c13.3 0 24-10.7 24-24v-48c0-13.3-10.7-24-24-24z"/></svg>
<svg class="i" style="left:1139.8px;top:948.8px;width:29.3px;height:25.4px" viewBox="0 0 29.3 25.4" fill="#17a2b8"><path d="M.1 10.2Q.1 9.5.8 9.3L7.5 7.1 7.8 23.3 1.1 25.3Q.2 25.5.1 24.6ZM20.6 9.2 28.3 6.5Q29.1 6.3 29.1 7.2V21.2Q29.1 21.8 28.4 22.1L20.6 24.9ZM9.7 13.2 10.3 13.2Q12.2 15.9 14.45 18.3 16.7 15.9 18.8 13.2L19.4 13.2 19.3 25.1 9.7 22.6Z"/><path fill-rule="evenodd" d="M14.45 0A6 6 0 0 1 20.45 6C20.45 8.7 17.2 12.6 14.45 15.9 11.7 12.6 8.45 8.7 8.45 6A6 6 0 0 1 14.45 0ZM14.45 3.9A1.75 1.75 0 1 0 14.45 7.4 1.75 1.75 0 1 0 14.45 3.9Z"/></svg>
<a href="#" class="t" style="left:330.40px;top:990.52px;font-size:18.7px;letter-spacing:-0.400px;color:#17a2b8;transform:scaleX(0.9619);transform-origin:0 0;">240P/NEAT</a>
<span class="t" style="left:665.00px;top:990.52px;font-size:18.7px;letter-spacing:-0.326px;color:#fff;">14.8</span>
<svg class="i" style="left:722.4px;top:992.5px;width:14px;height:24px" viewBox="-7 -12 14 24"><path fill="#fff" d="M0-10.9 5.8-3.2H1.7V9.4Q1.7 10.7 0 10.7T-1.7 9.4V-3.2H-5.8Z"/></svg>
<span class="t" style="left:769.70px;top:990.52px;font-size:18.7px;letter-spacing:-0.364px;color:#fff;">2025-11-03 01:21</span>
<span class="t" style="left:969.70px;top:990.52px;font-size:18.7px;letter-spacing:0.071px;color:#fff;">Taurus</span>
<svg class="i" style="left:1079.5px;top:996.0px;width:20.2px;height:17.0px;" viewBox="16.0 48.0 496.0 416.0" preserveAspectRatio="none" fill="#17a2b8"><path d="M40 48c-13.3 0-24 10.7-24 24v48c0 13.3 10.7 24 24 24h48c13.3 0 24-10.7 24-24V72c0-13.3-10.7-24-24-24zm152 16c-17.7 0-32 14.3-32 32s14.3 32 32 32h288c17.7 0 32-14.3 32-32s-14.3-32-32-32zm0 160c-17.7 0-32 14.3-32 32s14.3 32 32 32h288c17.7 0 32-14.3 32-32s-14.3-32-32-32zm0 160c-17.7 0-32 14.3-32 32s14.3 32 32 32h288c17.7 0 32-14.3 32-32s-14.3-32-32-32zM16 232v48c0 13.3 10.7 24 24 24h48c13.3 0 24-10.7 24-24v-48c0-13.3-10.7-24-24-24H40c-13.3 0-24 10.7-24 24m24 136c-13.3 0-24 10.7-24 24v48c0 13.3 10.7 24 24 24h48c13.3 0 24-10.7 24-24v-48c0-13.3-10.7-24-24-24z"/></svg>
<svg class="i" style="left:1139.8px;top:991.8px;width:29.3px;height:25.4px" viewBox="0 0 29.3 25.4" fill="#17a2b8"><path d="M.1 10.2Q.1 9.5.8 9.3L7.5 7.1 7.8 23.3 1.1 25.3Q.2 25.5.1 24.6ZM20.6 9.2 28.3 6.5Q29.1 6.3 29.1 7.2V21.2Q29.1 21.8 28.4 22.1L20.6 24.9ZM9.7 13.2 10.3 13.2Q12.2 15.9 14.45 18.3 16.7 15.9 18.8 13.2L19.4 13.2 19.3 25.1 9.7 22.6Z"/><path fill-rule="evenodd" d="M14.45 0A6 6 0 0 1 20.45 6C20.45 8.7 17.2 12.6 14.45 15.9 11.7 12.6 8.45 8.7 8.45 6A6 6 0 0 1 14.45 0ZM14.45 3.9A1.75 1.75 0 1 0 14.45 7.4 1.75 1.75 0 1 0 14.45 3.9Z"/></svg>
<a href="#" class="t" style="left:329.40px;top:1033.52px;font-size:18.7px;letter-spacing:-0.047px;color:#17a2b8;">141P-B/Machholz</a>
<span class="t" style="left:665.00px;top:1033.52px;font-size:18.7px;letter-spacing:-0.326px;color:#fff;">14.9</span>
<svg class="i" style="left:722.4px;top:1035.5px;width:14px;height:24px" viewBox="-7 -12 14 24"><path fill="#fff" d="M0-10.9 5.8-3.2H1.7V9.4Q1.7 10.7 0 10.7T-1.7 9.4V-3.2H-5.8Z"/></svg>
<span class="t" style="left:769.70px;top:1033.52px;font-size:18.7px;letter-spacing:-0.364px;color:#fff;">2025-11-02 16:48</span>
<span class="t" style="left:952.85px;top:1033.52px;font-size:18.7px;letter-spacing:0.100px;color:#fff;">Ophiuchus</span>
<svg class="i" style="left:1079.5px;top:1039.0px;width:20.2px;height:17.0px;" viewBox="16.0 48.0 496.0 416.0" preserveAspectRatio="none" fill="#17a2b8"><path d="M40 48c-13.3 0-24 10.7-24 24v48c0 13.3 10.7 24 24 24h48c13.3 0 24-10.7 24-24V72c0-13.3-10.7-24-24-24zm152 16c-17.7 0-32 14.3-32 32s14.3 32 32 32h288c17.7 0 32-14.3 32-32s-14.3-32-32-32zm0 160c-17.7 0-32 14.3-32 32s14.3 32 32 32h288c17.7 0 32-14.3 32-32s-14.3-32-32-32zm0 160c-17.7 0-32 14.3-32 32s14.3 32 32 32h288c17.7 0 32-14.3 32-32s-14.3-32-32-32zM16 232v48c0 13.3 10.7 24 24 24h48c13.3 0 24-10.7 24-24v-48c0-13.3-10.7-24-24-24H40c-13.3 0-24 10.7-24 24m24 136c-13.3 0-24 10.7-24 24v48c0 13.3 10.7 24 24 24h48c13.3 0 24-10.7 24-24v-48c0-13.3-10.7-24-24-24z"/></svg>
<svg class="i" style="left:1139.8px;top:1034.8px;width:29.3px;height:25.4px" viewBox="0 0 29.3 25.4" fill="#17a2b8"><path d="M.1 10.2Q.1 9.5.8 9.3L7.5 7.1 7.8 23.3 1.1 25.3Q.2 25.5.1 24.6ZM20.6 9.2 28.3 6.5Q29.1 6.3 29.1 7.2V21.2Q29.1 21.8 28.4 22.1L20.6 24.9ZM9.7 13.2 10.3 13.2Q12.2 15.9 14.45 18.3 16.7 15.9 18.8 13.2L19.4 13.2 19.3 25.1 9.7 22.6Z"/><path fill-rule="evenodd" d="M14.45 0A6 6 0 0 1 20.45 6C20.45 8.7 17.2 12.6 14.45 15.9 11.7 12.6 8.45 8.7 8.45 6A6 6 0 0 1 14.45 0ZM14.45 3.9A1.75 1.75 0 1 0 14.45 7.4 1.75 1.75 0 1 0 14.45 3.9Z"/></svg>
<span class="t" style="left:324.00px;top:1087.52px;font-size:18.7px;letter-spacing:-0.128px;color:#fff;">Showing 1 to 6 of 6 entries</span>
<div class="abs" style="left:979px;top:1072px;width:213px;height:47px;box-sizing:border-box;border:1px solid #6c757d;border-radius:6px;background:#393f46"></div>
<div class="abs" style="left:1082px;top:1072px;width:42px;height:47px;box-sizing:border-box;border:1px solid #007bff;background:#3f6791"></div>
<span class="t" style="left:994.00px;top:1081.52px;font-size:18.7px;letter-spacing:0.120px;color:#6c757d;">Previous</span>
<span class="t" style="left:1098.00px;top:1081.52px;font-size:18.7px;letter-spacing:0.000px;color:#fff;">1</span>
<span class="t" style="left:1137.80px;top:1081.52px;font-size:18.7px;letter-spacing:-0.344px;color:#6c757d;">Next</span>
</section>
<section>
<div class="abs" style="left:1202px;top:71px;width:1px;height:1057px;background:#007bff"></div>
<div class="abs hdr" style="left:1203px;top:71px;width:634px;height:62px"></div>
<h3 class="t" style="left:1222.00px;top:86.90px;font-size:28px;letter-spacing:0.023px;color:#fff;">Latest image</h3>
<svg class="i" style="left:1223px;top:153px;width:450px;height:350px;border-radius:5px;overflow:hidden" viewBox="0 0 450 350">
<defs>
<radialGradient id="bgg" gradientUnits="userSpaceOnUse" cx="240" cy="190" r="320"><stop offset="0" stop-color="#181510"/><stop offset="0.6" stop-color="#14120e"/><stop offset="1" stop-color="#0c0c0b"/></radialGradient>
<linearGradient id="tl1" gradientUnits="userSpaceOnUse" x1="206" y1="46" x2="262" y2="350"><stop offset="0" stop-color="#d6c8a2" stop-opacity=".85"/><stop offset="0.12" stop-color="#b3a580" stop-opacity=".62"/><stop offset="0.3" stop-color="#8d8060" stop-opacity=".46"/><stop offset="0.55" stop-color="#6b6045" stop-opacity=".3"/><stop offset="0.8" stop-color="#564c36" stop-opacity=".2"/><stop offset="1" stop-color="#4a412c" stop-opacity=".13"/></linearGradient>
<linearGradient id="tl2" gradientUnits="userSpaceOnUse" x1="206" y1="46" x2="228" y2="200"><stop offset="0" stop-color="#fff6dc" stop-opacity=".95"/><stop offset="0.35" stop-color="#d9cba6" stop-opacity=".45"/><stop offset="1" stop-color="#8a7d5c" stop-opacity="0"/></linearGradient>
<filter id="b9" filterUnits="userSpaceOnUse" x="0" y="0" width="450" height="440"><feGaussianBlur stdDeviation="6"/></filter>
<filter id="b4" filterUnits="userSpaceOnUse" x="0" y="0" width="450" height="350"><feGaussianBlur stdDeviation="3"/></filter>
<filter id="b2" filterUnits="userSpaceOnUse" x="150" y="0" width="120" height="100"><feGaussianBlur stdDeviation="1.6"/></filter>
<filter id="stars" filterUnits="userSpaceOnUse" x="0" y="0" width="450" height="350"><feTurbulence type="fractalNoise" baseFrequency="0.8" numOctaves="1" seed="7"/><feColorMatrix type="matrix" values="0 0 0 0 .42  0 0 0 0 .39  0 0 0 0 .34  3 3 3 0 -5.4"/></filter>
</defs>
<rect width="450" height="350" fill="url(#bgg)"/>
<rect width="450" height="350" filter="url(#stars)" opacity=".5"/>
<path d="M202.500 47 L210 42 L400 420 L217 420 Z" fill="url(#tl1)" filter="url(#b9)"/>
<path d="M204.500 46 L208.500 45 L240 200 L213 200 Z" fill="url(#tl2)" filter="url(#b4)"/>
<circle cx="206.500" cy="46" r="3.600" fill="#eef6ec" filter="url(#b2)"/>
<circle cx="206.500" cy="45.500" r="1.700" fill="#fff"/>
<circle cx="113.300" cy="41" r="2.600" fill="#caa878" opacity=".5" filter="url(#b2)"/>
<circle cx="113.300" cy="41" r="1.300" fill="#f0d8a8"/>
</svg>
<p>
<span class="t" style="left:1222.60px;top:524.52px;font-size:18.7px;letter-spacing:-0.212px;color:#fff;">Image of comet C/2023 A3 (Tsuchinshan-ATLAS), obtained on 2024 Nov.</span>
<span class="t" style="left:1223.60px;top:554.52px;font-size:18.7px;letter-spacing:-0.238px;color:#fff;">6 (19h10UT) at E-EYE Observatory in Spain with 280 mm, f/2.2 telescope</span>
<span class="t" style="left:1223.60px;top:584.52px;font-size:18.7px;letter-spacing:-0.249px;color:#fff;">and ASI6200MC. Image is a stack of 47 2-minute exposures. Copyright ©</span>
<span class="t" style="left:1223.60px;top:614.52px;font-size:18.7px;letter-spacing:-0.400px;color:#fff;transform:scaleX(0.9914);transform-origin:0 0;">2024 by R. Palcic.</span>
</p>
</section><section>
<div class="abs hdr" style="left:1203px;top:683px;width:634px;height:97px"></div>
<span class="t" style="left:1222.00px;top:698.90px;font-size:28px;letter-spacing:-0.086px;color:#fff;">Lightcurve of comet C/2023 A3 (Tsuchinshan-</span>
<span class="t" style="left:1224.00px;top:734.90px;font-size:28px;letter-spacing:-0.599px;color:#fff;transform:scaleX(0.9298);transform-origin:0 0;">ATLAS)</span>
<svg class="i" style="left:1203px;top:780px;width:634px;height:348px" viewBox="1203 780 634 348" font-family="Liberation Sans, sans-serif"><rect x="1357.0" y="850" width="1.4" height="280" fill="#858580"/><rect x="1445.9" y="850" width="1.4" height="280" fill="#858580"/><rect x="1535.3" y="850" width="1.4" height="280" fill="#858580"/><rect x="1623.8" y="850" width="1.4" height="280" fill="#858580"/><rect x="1713.9" y="850" width="1.4" height="280" fill="#858580"/><rect x="1291" y="874.7" width="460" height="1.4" fill="#858580"/><rect x="1291" y="973.7" width="460" height="2.2" fill="#858580"/><rect x="1291" y="1073.7" width="460" height="1.4" fill="#858580"/><rect x="1290.7" y="850" width="1.3" height="280" fill="#dcdcdc"/><rect x="1488.3" y="850" width="1.9" height="280" fill="#c0523f"/><path d="M1685.2 852.5V1130" stroke="#e8e8e8" stroke-width="1.6" stroke-dasharray="3.2 3.2" fill="none"/><g fill="none" stroke="#12b886" stroke-linecap="round"><path d="M1495.5 878V914.5" stroke-width="6.2"/><path d="M1493.6 984L1491.5 1000 1488.5 1030 1485.8 1054" stroke-width="4"/><path d="M1497.4 984L1498.5 1010 1501 1045 1504.5 1085 1508 1110 1511 1130" stroke-width="5.5"/></g><path fill="none" stroke="#fff" stroke-width="1.5" d="M1493.5 943.2h5.2M1496.1 940.6v5.2M1493.4 970.6h5.2M1496.0 968.0v5.2M1493.6 946.5h5.2M1496.2 943.9v5.2M1493.2 927.7h5.2M1495.8 925.1v5.2M1494.5 953.5h5.2M1497.1 950.9v5.2M1492.4 922.5h5.2M1495.0 919.9v5.2M1494.0 922.3h5.2M1496.6 919.7v5.2M1479.8 1050.1h5.2M1482.4 1047.5v5.2M1483.9 1067.1h5.2M1486.5 1064.5v5.2M1485.0 1046.0h5.2M1487.6 1043.4v5.2M1486.2 991.9h5.2M1488.8 989.3v5.2M1481.6 1033.0h5.2M1484.2 1030.4v5.2M1487.5 994.7h5.2M1490.1 992.1v5.2M1490.9 980.6h5.2M1493.5 978.0v5.2M1489.6 1022.9h5.2M1492.2 1020.3v5.2M1486.9 1032.0h5.2M1489.5 1029.4v5.2M1487.4 1030.0h5.2M1490.0 1027.4v5.2M1484.5 1024.9h5.2M1487.1 1022.3v5.2M1483.9 1067.9h5.2M1486.5 1065.3v5.2M1483.8 1060.3h5.2M1486.4 1057.7v5.2M1485.9 1007.8h5.2M1488.5 1005.2v5.2M1484.9 1004.7h5.2M1487.5 1002.1v5.2M1482.0 1056.8h5.2M1484.6 1054.2v5.2M1481.5 1060.6h5.2M1484.1 1058.0v5.2M1483.6 1066.0h5.2M1486.2 1063.4v5.2M1489.5 978.0h5.2M1492.1 975.4v5.2M1481.8 1063.7h5.2M1484.4 1061.1v5.2M1481.0 1067.1h5.2M1483.6 1064.5v5.2M1491.6 984.4h5.2M1494.2 981.8v5.2M1481.0 1057.4h5.2M1483.6 1054.8v5.2M1489.4 985.7h5.2M1492.0 983.1v5.2M1483.0 1066.3h5.2M1485.6 1063.7v5.2M1488.4 988.4h5.2M1491.0 985.8v5.2M1487.3 986.9h5.2M1489.9 984.3v5.2M1480.2 1058.3h5.2M1482.8 1055.7v5.2M1484.7 1036.2h5.2M1487.3 1033.6v5.2M1491.3 994.8h5.2M1493.9 992.2v5.2M1491.1 989.5h5.2M1493.7 986.9v5.2M1489.7 988.3h5.2M1492.3 985.7v5.2M1487.5 996.7h5.2M1490.1 994.1v5.2M1483.2 1066.6h5.2M1485.8 1064.0v5.2M1500.9 1028.2h5.2M1503.5 1025.6v5.2M1495.1 1011.9h5.2M1497.7 1009.3v5.2M1508.1 1115.4h5.2M1510.7 1112.8v5.2M1498.8 994.1h5.2M1501.4 991.5v5.2M1493.9 1012.3h5.2M1496.5 1009.7v5.2M1502.6 1106.6h5.2M1505.2 1104.0v5.2M1493.0 1026.9h5.2M1495.6 1024.3v5.2M1495.7 992.4h5.2M1498.3 989.8v5.2M1497.4 1017.5h5.2M1500.0 1014.9v5.2M1497.6 1040.0h5.2M1500.2 1037.4v5.2M1507.6 1125.9h5.2M1510.2 1123.3v5.2M1505.9 1079.9h5.2M1508.5 1077.3v5.2M1492.9 1007.3h5.2M1495.5 1004.7v5.2M1511.4 1120.8h5.2M1514.0 1118.2v5.2M1493.7 1018.7h5.2M1496.3 1016.1v5.2M1510.1 1102.4h5.2M1512.7 1099.8v5.2M1499.7 1009.5h5.2M1502.3 1006.9v5.2M1508.0 1118.2h5.2M1510.6 1115.6v5.2M1494.5 1049.3h5.2M1497.1 1046.7v5.2M1497.8 984.2h5.2M1500.4 981.6v5.2M1498.2 1016.7h5.2M1500.8 1014.1v5.2M1499.6 1020.0h5.2M1502.2 1017.4v5.2M1499.3 1084.3h5.2M1501.9 1081.7v5.2M1497.6 1006.1h5.2M1500.2 1003.5v5.2M1493.0 989.0h5.2M1495.6 986.4v5.2M1505.4 1076.9h5.2M1508.0 1074.3v5.2M1499.4 1086.8h5.2M1502.0 1084.2v5.2M1503.1 1121.7h5.2M1505.7 1119.1v5.2M1493.0 980.7h5.2M1495.6 978.1v5.2M1494.4 1054.1h5.2M1497.0 1051.5v5.2M1494.6 1006.2h5.2M1497.2 1003.6v5.2M1496.9 1079.4h5.2M1499.5 1076.8v5.2M1501.9 1038.4h5.2M1504.5 1035.8v5.2M1510.3 1128.0h5.2M1512.9 1125.4v5.2M1504.6 1096.4h5.2M1507.2 1093.8v5.2M1491.8 1000.5h5.2M1494.4 997.9v5.2M1497.2 980.9h5.2M1499.8 978.3v5.2M1509.7 1097.6h5.2M1512.3 1095.0v5.2M1495.4 981.4h5.2M1498.0 978.8v5.2M1502.5 1061.4h5.2M1505.1 1058.8v5.2M1502.3 1030.8h5.2M1504.9 1028.2v5.2M1495.3 990.0h5.2M1497.9 987.4v5.2M1509.6 1102.1h5.2M1512.2 1099.5v5.2M1507.0 1102.1h5.2M1509.6 1099.5v5.2M1510.8 1109.2h5.2M1513.4 1106.6v5.2M1499.7 1036.6h5.2M1502.3 1034.0v5.2M1512.0 1120.1h5.2M1514.6 1117.5v5.2M1501.8 1048.4h5.2M1504.4 1045.8v5.2"/><path fill="none" stroke="#12b886" stroke-width="1.5" d="M1493.3 911.4h5.2M1495.9 908.8v5.2M1492.4 901.6h5.2M1495.0 899.0v5.2M1493.4 899.9h5.2M1496.0 897.3v5.2M1493.5 879.3h5.2M1496.1 876.7v5.2M1494.7 916.7h5.2M1497.3 914.1v5.2M1492.5 905.9h5.2M1495.1 903.3v5.2M1493.3 906.1h5.2M1495.9 903.5v5.2M1494.4 894.1h5.2M1497.0 891.5v5.2M1494.0 879.4h5.2M1496.6 876.8v5.2M1493.3 877.2h5.2M1495.9 874.6v5.2M1491.8 895.7h5.2M1494.4 893.1v5.2M1493.0 904.6h5.2M1495.6 902.0v5.2M1494.8 901.2h5.2M1497.4 898.6v5.2M1490.8 886.5h5.2M1493.4 883.9v5.2M1493.7 888.3h5.2M1496.3 885.7v5.2M1491.5 884.3h5.2M1494.1 881.7v5.2M1493.7 913.1h5.2M1496.3 910.5v5.2M1494.7 894.1h5.2M1497.3 891.5v5.2M1493.7 889.4h5.2M1496.3 886.8v5.2M1492.6 884.1h5.2M1495.2 881.5v5.2M1494.8 909.0h5.2M1497.4 906.4v5.2M1492.5 912.1h5.2M1495.1 909.5v5.2M1492.2 899.9h5.2M1494.8 897.3v5.2M1492.9 881.6h5.2M1495.5 879.0v5.2M1494.5 910.3h5.2M1497.1 907.7v5.2M1495.0 905.2h5.2M1497.6 902.6v5.2M1491.5 887.3h5.2M1494.1 884.7v5.2M1492.0 894.5h5.2M1494.6 891.9v5.2M1492.5 884.8h5.2M1495.1 882.2v5.2M1492.9 901.7h5.2M1495.5 899.1v5.2M1494.4 888.9h5.2M1497.0 886.3v5.2M1492.8 916.3h5.2M1495.4 913.7v5.2M1490.8 879.1h5.2M1493.4 876.5v5.2M1491.0 911.8h5.2M1493.6 909.2v5.2M1493.3 905.1h5.2M1495.9 902.5v5.2M1494.2 888.7h5.2M1496.8 886.1v5.2M1491.3 876.8h5.2M1493.9 874.2v5.2M1490.9 894.6h5.2M1493.5 892.0v5.2M1491.8 910.0h5.2M1494.4 907.4v5.2M1490.9 881.8h5.2M1493.5 879.2v5.2M1492.7 901.8h5.2M1495.3 899.2v5.2M1493.6 901.8h5.2M1496.2 899.2v5.2M1495.0 909.1h5.2M1497.6 906.5v5.2M1491.6 904.1h5.2M1494.2 901.5v5.2M1491.5 895.5h5.2M1494.1 892.9v5.2M1492.8 876.4h5.2M1495.4 873.8v5.2M1491.6 905.3h5.2M1494.2 902.7v5.2M1492.2 887.2h5.2M1494.8 884.6v5.2M1493.1 904.6h5.2M1495.7 902.0v5.2M1494.1 901.2h5.2M1496.7 898.6v5.2M1494.2 892.1h5.2M1496.8 889.5v5.2M1491.2 913.2h5.2M1493.8 910.6v5.2M1494.0 914.2h5.2M1496.6 911.6v5.2M1492.7 881.3h5.2M1495.3 878.7v5.2M1494.8 901.6h5.2M1497.4 899.0v5.2M1493.2 891.4h5.2M1495.8 888.8v5.2M1494.3 912.1h5.2M1496.9 909.5v5.2M1492.8 914.7h5.2M1495.4 912.1v5.2M1491.7 902.7h5.2M1494.3 900.1v5.2M1494.4 905.6h5.2M1497.0 903.0v5.2M1494.0 954.2h5.2M1496.6 951.6v5.2M1494.2 929.4h5.2M1496.8 926.8v5.2M1495.1 973.9h5.2M1497.7 971.3v5.2M1494.1 948.1h5.2M1496.7 945.5v5.2M1494.3 935.6h5.2M1496.9 933.0v5.2M1493.0 966.6h5.2M1495.6 964.0v5.2M1492.9 921.8h5.2M1495.5 919.2v5.2M1494.1 948.9h5.2M1496.7 946.3v5.2M1492.0 945.3h5.2M1494.6 942.7v5.2M1492.2 963.9h5.2M1494.8 961.3v5.2M1492.5 963.4h5.2M1495.1 960.8v5.2M1494.0 936.4h5.2M1496.6 933.8v5.2M1492.2 925.1h5.2M1494.8 922.5v5.2M1493.9 947.0h5.2M1496.5 944.4v5.2M1494.1 965.7h5.2M1496.7 963.1v5.2M1493.5 971.9h5.2M1496.1 969.3v5.2M1479.8 1065.6h5.2M1482.4 1063.0v5.2M1489.4 997.5h5.2M1492.0 994.9v5.2M1489.9 1004.8h5.2M1492.5 1002.2v5.2M1484.4 1044.4h5.2M1487.0 1041.8v5.2M1482.7 1060.5h5.2M1485.3 1057.9v5.2M1487.4 1007.4h5.2M1490.0 1004.8v5.2M1484.5 1060.6h5.2M1487.1 1058.0v5.2M1491.5 996.3h5.2M1494.1 993.7v5.2M1481.7 1066.5h5.2M1484.3 1063.9v5.2M1482.9 1037.6h5.2M1485.5 1035.0v5.2M1485.5 1033.7h5.2M1488.1 1031.1v5.2M1481.4 1040.9h5.2M1484.0 1038.3v5.2M1481.7 1066.5h5.2M1484.3 1063.9v5.2M1489.2 1018.1h5.2M1491.8 1015.5v5.2M1485.1 1036.5h5.2M1487.7 1033.9v5.2M1480.7 1049.9h5.2M1483.3 1047.3v5.2M1484.8 1034.0h5.2M1487.4 1031.4v5.2M1483.5 1065.9h5.2M1486.1 1063.3v5.2M1488.5 1002.3h5.2M1491.1 999.7v5.2M1489.7 989.2h5.2M1492.3 986.6v5.2M1484.8 1059.2h5.2M1487.4 1056.6v5.2M1484.9 1027.2h5.2M1487.5 1024.6v5.2M1490.2 994.8h5.2M1492.8 992.2v5.2M1480.1 1064.4h5.2M1482.7 1061.8v5.2M1479.8 1057.4h5.2M1482.4 1054.8v5.2M1487.8 995.1h5.2M1490.4 992.5v5.2M1482.5 1049.5h5.2M1485.1 1046.9v5.2M1488.4 1012.6h5.2M1491.0 1010.0v5.2M1491.7 987.2h5.2M1494.3 984.6v5.2M1490.2 988.8h5.2M1492.8 986.2v5.2M1487.0 1000.1h5.2M1489.6 997.5v5.2M1485.1 1033.2h5.2M1487.7 1030.6v5.2M1486.8 1015.1h5.2M1489.4 1012.5v5.2M1483.1 1033.1h5.2M1485.7 1030.5v5.2M1490.2 996.0h5.2M1492.8 993.4v5.2M1484.4 1044.4h5.2M1487.0 1041.8v5.2M1482.9 1060.9h5.2M1485.5 1058.3v5.2M1480.8 1061.1h5.2M1483.4 1058.5v5.2M1485.0 1055.0h5.2M1487.6 1052.4v5.2M1481.1 1063.3h5.2M1483.7 1060.7v5.2M1490.9 1007.8h5.2M1493.5 1005.2v5.2M1492.3 997.2h5.2M1494.9 994.6v5.2M1480.2 1062.6h5.2M1482.8 1060.0v5.2M1490.4 999.1h5.2M1493.0 996.5v5.2M1486.2 1001.1h5.2M1488.8 998.5v5.2M1482.0 1059.9h5.2M1484.6 1057.3v5.2M1480.4 1057.9h5.2M1483.0 1055.3v5.2M1488.3 1018.3h5.2M1490.9 1015.7v5.2M1489.6 979.6h5.2M1492.2 977.0v5.2M1486.4 1049.0h5.2M1489.0 1046.4v5.2M1479.9 1066.5h5.2M1482.5 1063.9v5.2M1487.7 1030.6h5.2M1490.3 1028.0v5.2M1487.2 1030.3h5.2M1489.8 1027.7v5.2M1486.9 994.6h5.2M1489.5 992.0v5.2M1487.7 987.3h5.2M1490.3 984.7v5.2M1485.4 1035.4h5.2M1488.0 1032.8v5.2M1482.6 1037.1h5.2M1485.2 1034.5v5.2M1487.8 994.2h5.2M1490.4 991.6v5.2M1485.1 1060.3h5.2M1487.7 1057.7v5.2M1479.9 1064.5h5.2M1482.5 1061.9v5.2M1493.3 983.5h5.2M1495.9 980.9v5.2M1488.2 1025.4h5.2M1490.8 1022.8v5.2M1487.8 1009.2h5.2M1490.4 1006.6v5.2M1485.2 1031.6h5.2M1487.8 1029.0v5.2M1481.3 1040.5h5.2M1483.9 1037.9v5.2M1485.7 1050.9h5.2M1488.3 1048.3v5.2M1489.3 994.0h5.2M1491.9 991.4v5.2M1482.4 1054.9h5.2M1485.0 1052.3v5.2M1487.4 995.2h5.2M1490.0 992.6v5.2M1482.3 1031.3h5.2M1484.9 1028.7v5.2M1483.6 1062.9h5.2M1486.2 1060.3v5.2M1485.8 1051.3h5.2M1488.4 1048.7v5.2M1483.7 1043.5h5.2M1486.3 1040.9v5.2M1484.7 1040.4h5.2M1487.3 1037.8v5.2M1482.8 1067.2h5.2M1485.4 1064.6v5.2M1491.4 1001.0h5.2M1494.0 998.4v5.2M1484.8 1055.4h5.2M1487.4 1052.8v5.2M1482.0 1059.1h5.2M1484.6 1056.5v5.2M1483.9 1063.0h5.2M1486.5 1060.4v5.2M1485.3 1050.3h5.2M1487.9 1047.7v5.2M1482.2 1056.7h5.2M1484.8 1054.1v5.2M1480.4 1053.2h5.2M1483.0 1050.6v5.2M1487.6 1011.0h5.2M1490.2 1008.4v5.2M1490.5 978.9h5.2M1493.1 976.3v5.2M1485.1 1044.4h5.2M1487.7 1041.8v5.2M1491.9 998.4h5.2M1494.5 995.8v5.2M1482.8 1047.3h5.2M1485.4 1044.7v5.2M1484.4 1046.6h5.2M1487.0 1044.0v5.2M1484.7 1033.4h5.2M1487.3 1030.8v5.2M1482.0 1068.0h5.2M1484.6 1065.4v5.2M1485.2 1050.9h5.2M1487.8 1048.3v5.2M1479.5 1067.0h5.2M1482.1 1064.4v5.2M1486.1 1042.0h5.2M1488.7 1039.4v5.2M1488.2 1000.8h5.2M1490.8 998.2v5.2M1489.2 982.4h5.2M1491.8 979.8v5.2M1484.7 1015.1h5.2M1487.3 1012.5v5.2M1491.5 1000.1h5.2M1494.1 997.5v5.2M1485.4 1035.2h5.2M1488.0 1032.6v5.2M1481.9 1066.4h5.2M1484.5 1063.8v5.2M1482.0 1067.8h5.2M1484.6 1065.2v5.2M1480.1 1058.9h5.2M1482.7 1056.3v5.2M1486.5 1040.1h5.2M1489.1 1037.5v5.2M1493.3 982.0h5.2M1495.9 979.4v5.2M1489.6 992.1h5.2M1492.2 989.5v5.2M1489.7 992.9h5.2M1492.3 990.3v5.2M1481.5 1041.6h5.2M1484.1 1039.0v5.2M1481.4 1065.4h5.2M1484.0 1062.8v5.2M1486.3 1032.8h5.2M1488.9 1030.2v5.2M1486.1 1013.9h5.2M1488.7 1011.3v5.2M1484.4 1046.1h5.2M1487.0 1043.5v5.2M1489.9 1004.0h5.2M1492.5 1001.4v5.2M1485.2 1005.5h5.2M1487.8 1002.9v5.2M1486.0 999.6h5.2M1488.6 997.0v5.2M1491.3 991.8h5.2M1493.9 989.2v5.2M1489.9 1016.8h5.2M1492.5 1014.2v5.2M1480.0 1055.8h5.2M1482.6 1053.2v5.2M1483.3 1067.5h5.2M1485.9 1064.9v5.2M1492.9 984.5h5.2M1495.5 981.9v5.2M1486.6 1021.5h5.2M1489.2 1018.9v5.2M1480.5 1066.7h5.2M1483.1 1064.1v5.2M1504.8 1069.7h5.2M1507.4 1067.1v5.2M1503.7 1100.3h5.2M1506.3 1097.7v5.2M1511.7 1127.9h5.2M1514.3 1125.3v5.2M1498.0 1085.5h5.2M1500.6 1082.9v5.2M1501.9 1088.0h5.2M1504.5 1085.4v5.2M1492.7 1010.6h5.2M1495.3 1008.0v5.2M1497.0 1070.6h5.2M1499.6 1068.0v5.2M1500.7 1053.6h5.2M1503.3 1051.0v5.2M1497.2 1056.1h5.2M1499.8 1053.5v5.2M1500.8 1081.4h5.2M1503.4 1078.8v5.2M1505.4 1107.2h5.2M1508.0 1104.6v5.2M1513.6 1129.8h5.2M1516.2 1127.2v5.2M1501.4 1101.8h5.2M1504.0 1099.2v5.2M1497.7 996.2h5.2M1500.3 993.6v5.2M1506.5 1108.0h5.2M1509.1 1105.4v5.2M1496.0 1037.9h5.2M1498.6 1035.3v5.2M1504.1 1095.6h5.2M1506.7 1093.0v5.2M1503.1 1083.3h5.2M1505.7 1080.7v5.2M1501.2 1104.2h5.2M1503.8 1101.6v5.2M1500.2 1018.6h5.2M1502.8 1016.0v5.2M1511.5 1121.6h5.2M1514.1 1119.0v5.2M1492.2 984.3h5.2M1494.8 981.7v5.2M1496.2 1022.4h5.2M1498.8 1019.8v5.2M1498.1 1087.9h5.2M1500.7 1085.3v5.2M1496.6 1073.3h5.2M1499.2 1070.7v5.2M1496.1 991.8h5.2M1498.7 989.2v5.2M1502.3 1075.1h5.2M1504.9 1072.5v5.2M1497.9 1040.3h5.2M1500.5 1037.7v5.2M1494.9 1011.9h5.2M1497.5 1009.3v5.2M1508.2 1103.1h5.2M1510.8 1100.5v5.2M1492.7 989.9h5.2M1495.3 987.3v5.2M1506.9 1110.9h5.2M1509.5 1108.3v5.2M1501.7 1106.1h5.2M1504.3 1103.5v5.2M1496.7 1049.9h5.2M1499.3 1047.3v5.2M1504.1 1111.0h5.2M1506.7 1108.4v5.2M1508.0 1091.7h5.2M1510.6 1089.1v5.2M1497.9 1031.9h5.2M1500.5 1029.3v5.2M1509.1 1103.3h5.2M1511.7 1100.7v5.2M1497.7 1050.5h5.2M1500.3 1047.9v5.2M1497.4 993.5h5.2M1500.0 990.9v5.2M1492.5 990.6h5.2M1495.1 988.0v5.2M1501.1 1077.8h5.2M1503.7 1075.2v5.2M1501.2 1095.7h5.2M1503.8 1093.1v5.2M1500.3 1106.9h5.2M1502.9 1104.3v5.2M1497.3 1012.3h5.2M1499.9 1009.7v5.2M1493.8 991.1h5.2M1496.4 988.5v5.2M1506.2 1100.6h5.2M1508.8 1098.0v5.2M1494.1 1024.5h5.2M1496.7 1021.9v5.2M1499.8 1037.6h5.2M1502.4 1035.0v5.2M1494.7 1039.1h5.2M1497.3 1036.5v5.2M1504.6 1098.7h5.2M1507.2 1096.1v5.2M1512.2 1121.9h5.2M1514.8 1119.3v5.2M1506.4 1121.3h5.2M1509.0 1118.7v5.2M1503.3 1110.3h5.2M1505.9 1107.7v5.2M1496.6 1030.6h5.2M1499.2 1028.0v5.2M1511.9 1123.5h5.2M1514.5 1120.9v5.2M1495.5 1018.5h5.2M1498.1 1015.9v5.2M1496.8 1039.0h5.2M1499.4 1036.4v5.2M1497.4 1044.2h5.2M1500.0 1041.6v5.2M1496.3 1009.2h5.2M1498.9 1006.6v5.2M1505.8 1109.6h5.2M1508.4 1107.0v5.2M1506.7 1113.6h5.2M1509.3 1111.0v5.2M1497.5 1006.3h5.2M1500.1 1003.7v5.2M1504.1 1118.1h5.2M1506.7 1115.5v5.2M1494.7 981.6h5.2M1497.3 979.0v5.2M1501.6 1073.8h5.2M1504.2 1071.2v5.2M1509.6 1126.6h5.2M1512.2 1124.0v5.2M1500.6 1110.4h5.2M1503.2 1107.8v5.2M1503.8 1074.4h5.2M1506.4 1071.8v5.2M1492.5 991.4h5.2M1495.1 988.8v5.2M1508.7 1102.1h5.2M1511.3 1099.5v5.2M1495.8 991.6h5.2M1498.4 989.0v5.2M1497.1 1001.0h5.2M1499.7 998.4v5.2M1500.1 1091.1h5.2M1502.7 1088.5v5.2M1498.1 1013.6h5.2M1500.7 1011.0v5.2M1503.1 1069.3h5.2M1505.7 1066.7v5.2M1496.9 1044.0h5.2M1499.5 1041.4v5.2M1509.9 1126.8h5.2M1512.5 1124.2v5.2M1500.4 1063.7h5.2M1503.0 1061.1v5.2M1506.3 1100.1h5.2M1508.9 1097.5v5.2M1506.1 1121.5h5.2M1508.7 1118.9v5.2M1507.7 1112.6h5.2M1510.3 1110.0v5.2M1509.7 1115.4h5.2M1512.3 1112.8v5.2M1510.3 1113.4h5.2M1512.9 1110.8v5.2M1509.4 1125.8h5.2M1512.0 1123.2v5.2M1502.6 1069.8h5.2M1505.2 1067.2v5.2M1504.6 1110.2h5.2M1507.2 1107.6v5.2M1495.6 1049.1h5.2M1498.2 1046.5v5.2M1509.8 1102.7h5.2M1512.4 1100.1v5.2M1495.2 1040.7h5.2M1497.8 1038.1v5.2M1495.4 1010.8h5.2M1498.0 1008.2v5.2M1500.8 1026.1h5.2M1503.4 1023.5v5.2M1493.7 987.5h5.2M1496.3 984.9v5.2M1496.2 996.4h5.2M1498.8 993.8v5.2M1501.4 1107.0h5.2M1504.0 1104.4v5.2M1494.6 988.0h5.2M1497.2 985.4v5.2M1505.8 1081.8h5.2M1508.4 1079.2v5.2M1492.5 983.8h5.2M1495.1 981.2v5.2M1493.8 1007.5h5.2M1496.4 1004.9v5.2M1498.0 1016.2h5.2M1500.6 1013.6v5.2M1498.9 1084.0h5.2M1501.5 1081.4v5.2M1494.2 1007.6h5.2M1496.8 1005.0v5.2M1497.5 1005.6h5.2M1500.1 1003.0v5.2M1497.7 1029.6h5.2M1500.3 1027.0v5.2M1505.4 1111.7h5.2M1508.0 1109.1v5.2M1499.6 1020.6h5.2M1502.2 1018.0v5.2M1505.3 1121.4h5.2M1507.9 1118.8v5.2M1505.5 1074.5h5.2M1508.1 1071.9v5.2M1497.2 1061.5h5.2M1499.8 1058.9v5.2M1497.3 986.0h5.2M1499.9 983.4v5.2M1504.1 1110.1h5.2M1506.7 1107.5v5.2M1500.8 1070.5h5.2M1503.4 1067.9v5.2M1500.7 1023.0h5.2M1503.3 1020.4v5.2M1500.1 1092.2h5.2M1502.7 1089.6v5.2M1494.3 979.7h5.2M1496.9 977.1v5.2M1500.6 1040.0h5.2M1503.2 1037.4v5.2M1505.0 1099.2h5.2M1507.6 1096.6v5.2M1493.3 1003.2h5.2M1495.9 1000.6v5.2M1495.5 1031.3h5.2M1498.1 1028.7v5.2M1506.6 1116.9h5.2M1509.2 1114.3v5.2M1507.7 1089.6h5.2M1510.3 1087.0v5.2M1497.0 1021.6h5.2M1499.6 1019.0v5.2M1497.3 1002.1h5.2M1499.9 999.5v5.2M1496.1 978.2h5.2M1498.7 975.6v5.2M1509.7 1114.6h5.2M1512.3 1112.0v5.2M1493.6 991.2h5.2M1496.2 988.6v5.2M1499.6 1099.6h5.2M1502.2 1097.0v5.2M1499.5 1061.0h5.2M1502.1 1058.4v5.2M1508.7 1125.5h5.2M1511.3 1122.9v5.2M1504.0 1115.7h5.2M1506.6 1113.1v5.2M1504.3 1108.7h5.2M1506.9 1106.1v5.2M1502.5 1121.7h5.2M1505.1 1119.1v5.2M1502.5 1112.6h5.2M1505.1 1110.0v5.2M1501.2 1073.7h5.2M1503.8 1071.1v5.2M1497.8 1003.2h5.2M1500.4 1000.6v5.2M1495.8 1029.5h5.2M1498.4 1026.9v5.2M1493.8 990.2h5.2M1496.4 987.6v5.2M1501.6 1058.4h5.2M1504.2 1055.8v5.2M1499.5 1037.9h5.2M1502.1 1035.3v5.2M1494.5 994.9h5.2M1497.1 992.3v5.2M1503.8 1057.4h5.2M1506.4 1054.8v5.2M1507.6 1113.0h5.2M1510.2 1110.4v5.2M1493.8 980.0h5.2M1496.4 977.4v5.2M1501.0 1098.8h5.2M1503.6 1096.2v5.2M1500.8 1077.8h5.2M1503.4 1075.2v5.2M1497.1 979.7h5.2M1499.7 977.1v5.2M1502.1 1109.9h5.2M1504.7 1107.3v5.2M1500.0 1087.0h5.2M1502.6 1084.4v5.2M1498.4 1040.8h5.2M1501.0 1038.2v5.2M1495.8 1027.2h5.2M1498.4 1024.6v5.2M1499.8 1043.6h5.2M1502.4 1041.0v5.2M1494.3 1019.9h5.2M1496.9 1017.3v5.2M1502.3 1101.4h5.2M1504.9 1098.8v5.2M1508.3 1124.5h5.2M1510.9 1121.9v5.2M1502.2 1100.5h5.2M1504.8 1097.9v5.2M1501.2 1112.7h5.2M1503.8 1110.1v5.2M1492.8 1000.5h5.2M1495.4 997.9v5.2M1505.5 1094.7h5.2M1508.1 1092.1v5.2M1495.1 1006.8h5.2M1497.7 1004.2v5.2M1507.0 1113.7h5.2M1509.6 1111.1v5.2M1493.4 992.4h5.2M1496.0 989.8v5.2M1493.0 1003.1h5.2M1495.6 1000.5v5.2M1494.7 1046.4h5.2M1497.3 1043.8v5.2M1506.4 1122.1h5.2M1509.0 1119.5v5.2M1501.8 1067.3h5.2M1504.4 1064.7v5.2M1508.4 1105.9h5.2M1511.0 1103.3v5.2M1496.8 1042.5h5.2M1499.4 1039.9v5.2M1494.3 1047.4h5.2M1496.9 1044.8v5.2M1500.2 1045.1h5.2M1502.8 1042.5v5.2M1511.5 1128.2h5.2M1514.1 1125.6v5.2M1504.1 1092.5h5.2M1506.7 1089.9v5.2M1493.6 981.0h5.2M1496.2 978.4v5.2M1498.9 1034.9h5.2M1501.5 1032.3v5.2M1494.4 995.0h5.2M1497.0 992.4v5.2M1503.1 1066.9h5.2M1505.7 1064.3v5.2M1507.0 1112.5h5.2M1509.6 1109.9v5.2M1497.4 1003.3h5.2M1500.0 1000.7v5.2M1507.5 1120.3h5.2M1510.1 1117.7v5.2M1497.8 1036.7h5.2M1500.4 1034.1v5.2M1496.9 1000.7h5.2M1499.5 998.1v5.2M1508.4 1128.7h5.2M1511.0 1126.1v5.2M1507.6 1099.4h5.2M1510.2 1096.8v5.2M1499.1 1009.6h5.2M1501.7 1007.0v5.2M1499.2 1088.4h5.2M1501.8 1085.8v5.2M1493.5 991.3h5.2M1496.1 988.7v5.2M1503.5 1080.3h5.2M1506.1 1077.7v5.2M1501.0 1032.6h5.2M1503.6 1030.0v5.2M1497.6 1038.2h5.2M1500.2 1035.6v5.2M1498.4 997.8h5.2M1501.0 995.2v5.2M1498.1 999.7h5.2M1500.7 997.1v5.2M1501.5 1073.7h5.2M1504.1 1071.1v5.2M1498.8 1077.1h5.2M1501.4 1074.5v5.2M1512.7 1120.9h5.2M1515.3 1118.3v5.2M1506.8 1111.8h5.2M1509.4 1109.2v5.2M1497.4 997.6h5.2M1500.0 995.0v5.2M1500.1 1025.5h5.2M1502.7 1022.9v5.2M1497.0 1017.2h5.2M1499.6 1014.6v5.2M1502.3 1113.1h5.2M1504.9 1110.5v5.2M1496.8 1074.6h5.2M1499.4 1072.0v5.2M1492.9 983.1h5.2M1495.5 980.5v5.2M1513.3 1128.7h5.2M1515.9 1126.1v5.2M1500.9 1092.3h5.2M1503.5 1089.7v5.2M1505.7 1093.9h5.2M1508.3 1091.3v5.2M1499.0 1041.8h5.2M1501.6 1039.2v5.2M1500.0 1110.4h5.2M1502.6 1107.8v5.2M1495.7 1009.9h5.2M1498.3 1007.3v5.2M1494.7 1000.9h5.2M1497.3 998.3v5.2M1498.1 1078.9h5.2M1500.7 1076.3v5.2M1498.2 1069.0h5.2M1500.8 1066.4v5.2M1499.6 1078.6h5.2M1502.2 1076.0v5.2M1481.2 1076.8h5.2M1483.8 1074.2v5.2M1479.1 1084.6h5.2M1481.7 1082.0v5.2M1497.7 1108.0h5.2M1500.3 1105.4v5.2"/><path fill="none" stroke="#fff" stroke-width="1.5" d="M1491.8 954.2h5.2M1494.4 951.6v5.2M1492.2 955.9h5.2M1494.8 953.3v5.2M1494.0 972.6h5.2M1496.6 970.0v5.2M1493.0 944.3h5.2M1495.6 941.7v5.2M1486.0 1042.9h5.2M1488.6 1040.3v5.2M1484.8 1056.4h5.2M1487.4 1053.8v5.2M1490.3 1028.3h5.2M1492.9 1025.7v5.2M1484.7 1060.2h5.2M1487.3 1057.6v5.2M1486.4 1019.1h5.2M1489.0 1016.5v5.2M1488.5 1036.9h5.2M1491.1 1034.3v5.2M1485.8 1032.7h5.2M1488.4 1030.1v5.2M1490.1 1021.9h5.2M1492.7 1019.3v5.2M1484.5 1008.5h5.2M1487.1 1005.9v5.2M1509.3 1100.7h5.2M1511.9 1098.1v5.2M1505.5 1101.5h5.2M1508.1 1098.9v5.2M1502.0 1104.0h5.2M1504.6 1101.4v5.2M1496.4 1083.7h5.2M1499.0 1081.1v5.2M1494.9 997.9h5.2M1497.5 995.3v5.2M1499.0 1065.5h5.2M1501.6 1062.9v5.2M1496.1 986.3h5.2M1498.7 983.7v5.2M1497.5 1070.2h5.2M1500.1 1067.6v5.2M1496.2 1028.6h5.2M1498.8 1026.0v5.2M1492.5 1016.3h5.2M1495.1 1013.7v5.2M1513.5 1121.1h5.2M1516.1 1118.5v5.2M1507.7 1093.2h5.2M1510.3 1090.6v5.2"/><path d="M1470.5 1128 L1476.5 1100 L1483 1068 L1488.5 1040 L1491.5 1000 L1493.6 960 L1495 905 L1495.6 878 L1496.4 905 L1497 978 L1499 1015 L1502 1050 L1505.5 1085 L1510.2 1128" fill="none" stroke="#f0a030" stroke-width="1.3" stroke-dasharray="4 3.2"/><text x="1288.2" y="880.0" font-size="13.9" fill="#e8e8e8" text-anchor="end">−5.0</text><text x="1288.2" y="979.4" font-size="13.9" fill="#e8e8e8" text-anchor="end">0.0</text><text x="1288.2" y="1079.0" font-size="13.9" fill="#e8e8e8" text-anchor="end">5.0</text><text x="1295.4" y="818.6" font-size="12" fill="#f2f2f2" stroke="#f2f2f2" stroke-width=".2" textLength="291.8" lengthAdjust="spacing">Scatter fit: H<tspan font-size="8.4" dy="1.6">0</tspan><tspan dy="-1.6">=6.3; n=3.0; δ</tspan><tspan font-size="8.4" dy="1.6">90</tspan><tspan dy="-1.6">=2; gf=0.98; gb=-0.75; k=0.99</tspan></text><text transform="translate(1250.2 1089) rotate(-90)" font-size="15.2" fill="#e8e8e8" text-anchor="middle">Apparent total magnitude</text></svg>
</section></main>
<div id="dd" class="abs">
</div>
<div style="position:absolute;left:0;top:0;z-index:21">
<div class="abs" style="left:1480px;top:215px;width:348px;height:1px;background:#6c757d"></div>
<div class="abs" style="left:1480px;top:316px;width:348px;height:1px;background:#6c757d"></div>
<div class="abs" style="left:1480px;top:417px;width:348px;height:1px;background:#6c757d"></div>
<div class="abs" style="left:1481px;top:63px;width:349px;height:55px;box-sizing:border-box;border:2px solid #f5875f"></div>
<div class="abs" style="left:1780px;top:71px;width:40px;height:40px;background:#f4bd22;border-radius:3px;box-shadow:0 3px 6px rgba(0,0,0,.45)"></div>
<span class="t" style="left:1792.30px;top:77.23px;font-size:25.2px;letter-spacing:0.000px;color:#fff;font-family:NanumGothic,'Liberation Sans',sans-serif;-webkit-text-stroke:.6px #fff;">1</span>
<svg class="i" style="left:1499.8px;top:79.5px;width:25.7px;height:20.4px;" viewBox="48.1 8.0 568.6 536.0" preserveAspectRatio="none" fill="#fff"><path d="M256.1 248a120 120 0 1 0 0-240 120 120 0 1 0 0 240m-29.7 56c-98.5 0-178.3 79.8-178.3 178.3 0 16.4 13.3 29.7 29.7 29.7h196.5l10.9-54.5c4.3-21.7 15-41.6 30.6-57.2l67.3-67.3c-28-18.3-61.4-28.9-97.4-28.9h-59.4zm105.9 162.9-11.9 59.6c-.2.9-.3 1.9-.3 2.9 0 8 6.5 14.6 14.6 14.6 1 0 1.9-.1 2.9-.3l59.6-11.9c12.4-2.5 23.8-8.6 32.7-17.5l118.9-118.9-80-80-118.9 118.9c-8.9 8.9-15 20.3-17.5 32.7zm267.8-123c22.1-22.1 22.1-57.9 0-80s-57.9-22.1-80 0l-28.8 28.8 80 80z"/></svg>
<a href="#" class="t" style="left:1539.30px;top:75.52px;font-size:18.7px;letter-spacing:-0.122px;color:#fff;">Account</a>
<svg class="i" style="left:1499.8px;top:129.7px;width:20.7px;height:20.4px;" viewBox="0.0 0.0 512.0 512.0" preserveAspectRatio="none" fill="#fff"><path d="M336 352c97.2 0 176-78.8 176-176S433.2 0 336 0 160 78.8 160 176c0 18.7 2.9 36.8 8.3 53.7L7 391c-4.5 4.5-7 10.6-7 17v80c0 13.3 10.7 24 24 24h80c13.3 0 24-10.7 24-24v-40h40c13.3 0 24-10.7 24-24v-40h40c6.4 0 12.5-2.5 17-7l33.3-33.3c16.9 5.4 35 8.3 53.7 8.3m40-256a40 40 0 1 1 0 80 40 40 0 1 1 0-80"/></svg>
<a href="#" class="t" style="left:1534.50px;top:125.52px;font-size:18.7px;letter-spacing:-0.267px;color:#fff;">Change password</a>
<svg class="i" style="left:1500.6px;top:180.2px;width:19.2px;height:19.0px;" viewBox="16.0 16.0 480.0 480.0" preserveAspectRatio="none" fill="#fff"><path d="M247.2 17c-22.1-3.1-44.6.9-64.4 11.4l-74 39.5c-19.7 10.5-35.6 27-45.4 47.1l-36.7 75.6c-9.8 20.1-13 42.9-9.1 64.9l14.5 82.8c3.9 22.1 14.6 42.3 30.7 57.9l60.3 58.4c16.1 15.6 36.6 25.6 58.7 28.7l83 11.7c22.1 3.1 44.6-.9 64.4-11.4l74-39.5c19.7-10.5 35.6-27 45.4-47.2l36.7-75.5c9.8-20.1 13-42.9 9.1-64.9l-14.6-82.8c-3.9-22.1-14.6-42.3-30.7-57.9l-60.2-58.3c-16.1-15.6-36.6-25.6-58.7-28.7zM208 144a32 32 0 1 1 0 64 32 32 0 1 1 0-64m-64 192a32 32 0 1 1 64 0 32 32 0 1 1-64 0m224-64a32 32 0 1 1 0 64 32 32 0 1 1 0-64"/></svg>
<a href="#" class="t" style="left:1534.50px;top:175.52px;font-size:18.7px;letter-spacing:-0.016px;color:#fff;">Cookie policy</a>
<svg class="i" style="left:1499.8px;top:232.6px;width:21.2px;height:15.9px;" viewBox="-0.0 31.9 512.0 424.1" preserveAspectRatio="none" fill="#fff"><path d="M133.8 36.3c10.9 7.6 13.5 22.6 5.9 33.4l-56 80c-4.1 5.8-10.5 9.5-17.6 10.1S52 158 47 153L7 113c-9.3-9.4-9.3-24.6 0-34s24.6-9.3 34 0l19.8 19.8 39.6-56.6c7.6-10.9 22.6-13.5 33.4-5.9m0 160c10.9 7.6 13.5 22.6 5.9 33.4l-56 80c-4.1 5.8-10.5 9.5-17.6 10.1S52 318 47 313L7 273c-9.4-9.4-9.4-24.6 0-33.9s24.6-9.4 33.9 0l19.8 19.8 39.6-56.6c7.6-10.9 22.6-13.5 33.4-5.9zM224 96c0-17.7 14.3-32 32-32h224c17.7 0 32 14.3 32 32s-14.3 32-32 32H256c-17.7 0-32-14.3-32-32m0 160c0-17.7 14.3-32 32-32h224c17.7 0 32 14.3 32 32s-14.3 32-32 32H256c-17.7 0-32-14.3-32-32m-64 160c0-17.7 14.3-32 32-32h288c17.7 0 32 14.3 32 32s-14.3 32-32 32H192c-17.7 0-32-14.3-32-32m-96-40a40 40 0 1 1 0 80 40 40 0 1 1 0-80"/></svg>
<a href="#" class="t" style="left:1537.80px;top:226.52px;font-size:18.7px;letter-spacing:-0.111px;color:#fff;">My Observations</a>
<svg class="i" style="left:1499.8px;top:280.6px;width:25.7px;height:20.4px;" viewBox="0.0 16.0 576.0 496.0" preserveAspectRatio="none" fill="#fff"><path d="M64 128a112 112 0 1 1 224 0 112 112 0 1 1-224 0M0 464c0-97.2 78.8-176 176-176s176 78.8 176 176v6c0 23.2-18.8 42-42 42H42c-23.2 0-42-18.8-42-42zM432 64a96 96 0 1 1 0 192 96 96 0 1 1 0-192m0 240c79.5 0 144 64.5 144 144v22.4c0 23-18.6 41.6-41.6 41.6H389.6c6.6-12.5 10.4-26.8 10.4-42v-6c0-51.5-17.4-98.9-46.5-136.7 22.6-14.7 49.6-23.3 78.5-23.3"/></svg>
<a href="#" class="t" style="left:1542.50px;top:276.52px;font-size:18.7px;letter-spacing:-0.264px;color:#fff;">My Group</a>
<svg class="i" style="left:1499.8px;top:331.5px;width:25.7px;height:20.4px;" viewBox="48.4 8.0 584.1 535.5" preserveAspectRatio="none" fill="#fff"><path d="M256.5 8a120 120 0 1 1 0 240 120 120 0 1 1 0-240m-29.8 296h60.9c-12.9 26.8-7.8 58.2 11.5 79.5-20.2 22.3-24.8 55.8-9.4 83.4l22.5 40.4c.9 1.6 1.9 3.2 2.9 4.7h-237c-16.4 0-29.7-13.3-29.7-29.7 0-98.5 79.8-178.3 178.3-178.3m205.9-56.4c0-13.3 10.7-24 24-24h48c13.3 0 24 10.7 24 24v6.1c0 18.9 24.1 32.8 40.5 23.4l5-2.9c11.6-6.7 26.5-2.6 33 9.1l22.4 40.2c6.2 11.2 2.6 25.2-8.2 32l-4.7 2.9c-16.2 10.1-16.2 39.9 0 50.1l4.6 2.9c10.8 6.8 14.5 20.8 8.3 32L607 483.8c-6.5 11.7-21.4 15.9-33 9.1l-4.9-2.9c-16.4-9.5-40.5 4.5-40.5 23.4v6.1c0 13.3-10.7 24-24 24h-48c-13.3 0-24-10.7-24-24v-5.9c0-19-24.2-33-40.7-23.5l-4.8 2.8c-11.6 6.7-26.4 2.6-33-9.1l-22.6-40.4c-6.2-11.2-2.6-25.3 8.3-32.1l4.4-2.7c16.3-10.1 16.3-40.1 0-50.2l-4.5-2.8c-10.9-6.8-14.5-20.9-8.3-32.1l22.5-40.3c6.5-11.7 21.4-15.8 32.9-9.1l4.8 2.8c16.5 9.5 40.7-4.5 40.7-23.5v-5.9zm99.9 136.2a52 52 0 1 0-104 0 52 52 0 1 0 104 0"/></svg>
<a href="#" class="t" style="left:1539.30px;top:327.02px;font-size:18.7px;letter-spacing:0.256px;color:#fff;">Admin</a>
<svg class="i" style="left:1499.8px;top:381.1px;width:20.7px;height:20.4px;" viewBox="-0.1 -0.1 512.1 512.1" preserveAspectRatio="none" fill="#fff"><path d="m502.6 150.6-96 96c-9.2 9.2-22.9 11.9-34.9 6.9S352 236.9 352 224v-64H32c-17.7 0-32-14.3-32-32s14.3-32 32-32h320V32c0-12.9 7.8-24.6 19.8-29.6s25.7-2.2 34.9 6.9l96 96c12.5 12.5 12.5 32.8 0 45.3zm-397.3 352-96-96c-12.5-12.5-12.5-32.8 0-45.3l96-96c9.2-9.2 22.9-11.9 34.9-6.9S160 275.1 160 288v64h320c17.7 0 32 14.3 32 32s-14.3 32-32 32H160v64c0 12.9-7.8 24.6-19.8 29.6s-25.7 2.2-34.9-6.9z"/></svg>
<a href="#" class="t" style="left:1533.62px;top:377.02px;font-size:18.7px;letter-spacing:-0.400px;color:#fff;transform:scaleX(0.9850);transform-origin:0 0;">Exchange Users</a>
<svg class="i" style="left:1499.8px;top:434.3px;width:20.7px;height:16.9px;" viewBox="0.0 32.0 512.1 448.0" preserveAspectRatio="none" fill="#fff"><path d="M505 273c9.4-9.4 9.4-24.6 0-33.9L361 95c-6.9-6.9-17.2-8.9-26.2-5.2S320 102.3 320 112v80H208c-26.5 0-48 21.5-48 48v32c0 26.5 21.5 48 48 48h112v80c0 9.7 5.8 18.5 14.8 22.2s19.3 1.7 26.2-5.2zM160 96c17.7 0 32-14.3 32-32s-14.3-32-32-32H96C43 32 0 75 0 128v256c0 53 43 96 96 96h64c17.7 0 32-14.3 32-32s-14.3-32-32-32H96c-17.7 0-32-14.3-32-32V128c0-17.7 14.3-32 32-32z"/></svg>
<a href="#" class="t" style="left:1534.60px;top:428.02px;font-size:18.7px;letter-spacing:-0.154px;color:#fff;">Sign out</a>
</div>
<div class="abs" style="left:1833px;top:16px;width:2px;height:1106px;background:#9b9a98;z-index:40"></div>
</body></html>
